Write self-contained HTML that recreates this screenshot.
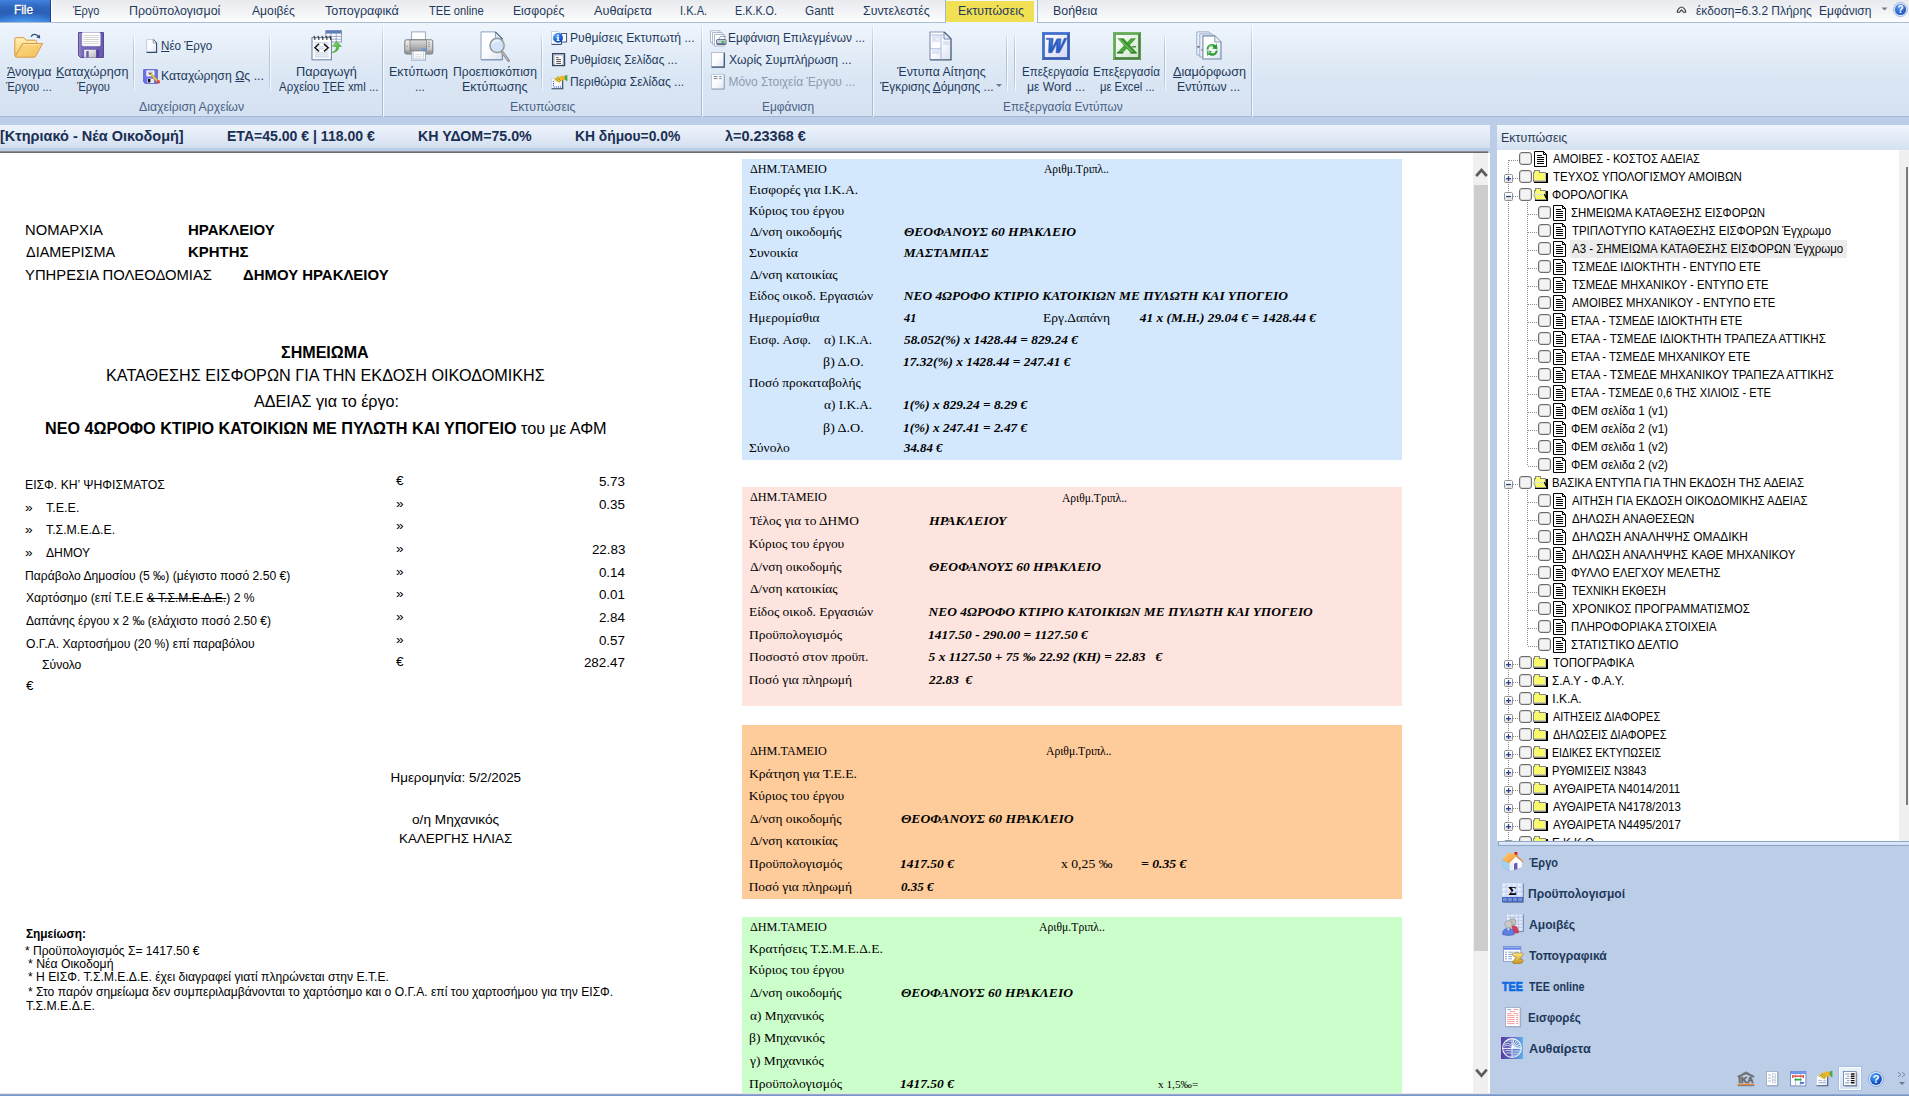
<!DOCTYPE html><html><head><meta charset="utf-8"><title>UI</title><style>html,body{margin:0;padding:0}body{width:1909px;height:1096px;overflow:hidden;position:relative;background:#bbcde7;font-family:"Liberation Sans",sans-serif}
.t{position:absolute;white-space:pre;line-height:1;transform-origin:0 0;font-family:"Liberation Sans",sans-serif;color:#000}
u{text-decoration:underline;text-underline-offset:1px}</style></head><body><div style="position:absolute;left:0px;top:0px;width:1909px;height:22px;background:linear-gradient(#e8eaee,#f1f2f5 45%,#fdfdfe)"></div><div style="position:absolute;left:0px;top:22px;width:1909px;height:95px;background:linear-gradient(#eff5fc,#e2ecf7 35%,#dae6f4 60%,#d6e2f1);border-top:1px solid #a9bbd5;box-sizing:border-box"></div><div style="position:absolute;left:0px;top:116px;width:1909px;height:1px;background:#a3b6d3"></div><div style="position:absolute;left:0px;top:117px;width:1909px;height:8px;background:#bbcde7"></div><div style="position:absolute;left:0px;top:0px;width:51px;height:22px;background:radial-gradient(ellipse 70% 60% at 50% 115%,#5cb0f8 0%,rgba(80,160,245,0.55) 45%,rgba(70,140,230,0) 100%),linear-gradient(#4282de,#3068c0 30%,#2a60b6 55%,#2d68c2 80%,#3a7cd6);border-right:1px solid #1b3f9a;box-sizing:border-box"></div><div style="position:absolute;left:51px;top:0px;width:1px;height:22px;background:#fff"></div><span class="t" style="left:13.55px;top:4px;font-size:12.5px;color:#fff;transform:scaleX(0.9474);-webkit-text-stroke:0.35px #fff;text-shadow:0 1px 1px rgba(20,40,90,0.5);">File</span><div style="position:absolute;left:945px;top:-2px;width:93px;height:25px;background:#f4f7fb;border:1px solid #a3b6d3;border-bottom:none;box-sizing:border-box"></div><div style="position:absolute;left:946px;top:1px;width:88px;height:21px;background:#f1e054"></div><div style="position:absolute;left:946px;top:22px;width:91px;height:1px;background:#eff5fc"></div><span class="t" style="left:73.20px;top:5px;font-size:12.5px;color:#1e395b;transform:scaleX(0.8767);">Έργο</span><span class="t" style="left:129.40px;top:5px;font-size:12.5px;color:#1e395b;transform:scaleX(0.9956);">Προϋπολογισμοί</span><span class="t" style="left:251.80px;top:5px;font-size:12.5px;color:#1e395b;transform:scaleX(0.9727);">Αμοιβές</span><span class="t" style="left:325.40px;top:5px;font-size:12.5px;color:#1e395b;transform:scaleX(1.0068);">Τοπογραφικά</span><span class="t" style="left:429.40px;top:5px;font-size:12.5px;color:#1e395b;transform:scaleX(0.8934);">ΤΕΕ online</span><span class="t" style="left:513.43px;top:5px;font-size:12.5px;color:#1e395b;transform:scaleX(0.9745);">Εισφορές</span><span class="t" style="left:594.00px;top:5px;font-size:12.5px;color:#1e395b;transform:scaleX(1.0196);">Αυθαίρετα</span><span class="t" style="left:679.71px;top:5px;font-size:12.5px;color:#1e395b;transform:scaleX(0.8897);">Ι.Κ.Α.</span><span class="t" style="left:735.44px;top:5px;font-size:12.5px;color:#1e395b;transform:scaleX(0.8638);">Ε.Κ.Κ.Ο.</span><span class="t" style="left:805.46px;top:5px;font-size:12.5px;color:#1e395b;transform:scaleX(0.9400);">Gantt</span><span class="t" style="left:862.91px;top:5px;font-size:12.5px;color:#1e395b;transform:scaleX(0.9894);">Συντελεστές</span><span class="t" style="left:958.01px;top:5px;font-size:12.5px;color:#1e395b;transform:scaleX(0.9894);">Εκτυπώσεις</span><span class="t" style="left:1053.21px;top:5px;font-size:12.5px;color:#1e395b;transform:scaleX(0.9907);">Βοήθεια</span><svg style="position:absolute;left:1676px;top:6px" width="11" height="8" viewBox="0 0 11 8"><path d="M1.2 6.3 C1.2 3.5 4 1 5.5 1 C7 1 9.8 3.5 9.8 6.3 L7.6 6.3 L5.5 3.8 L3.4 6.3 Z" fill="none" stroke="#3a3a3a" stroke-width="1.1" stroke-linejoin="round"/></svg><span class="t" style="left:1696.30px;top:5px;font-size:12.5px;color:#1e395b;transform:scaleX(0.9562);">έκδοση=6.3.2 Πλήρης</span><span class="t" style="left:1819.44px;top:5px;font-size:12.5px;color:#1e395b;transform:scaleX(0.9604);">Εμφάνιση</span><svg style="position:absolute;left:1881px;top:7px" width="7" height="4" viewBox="0 0 7 4"><path d="M0.5 0.5 L6.5 0.5 L3.5 3.5 Z" fill="#6d7a8c"/></svg><svg style="position:absolute;left:1893px;top:2px" width="15" height="15" viewBox="0 0 15 15"><defs><radialGradient id="hg" cx="0.4" cy="0.3" r="0.8"><stop offset="0" stop-color="#5b9bf0"/><stop offset="1" stop-color="#1247b5"/></radialGradient></defs><circle cx="7.5" cy="7.5" r="7" fill="#e8f0fb" stroke="#8aa6d6" stroke-width="0.8"/><circle cx="7.5" cy="7.5" r="5.6" fill="url(#hg)"/><text x="7.5" y="11.2" font-family="Liberation Sans" font-size="10" font-weight="700" fill="#fff" text-anchor="middle">?</text></svg><div style="position:absolute;left:382px;top:25px;width:1px;height:92px;background:linear-gradient(rgba(150,170,200,0.15),#a9bbd5 30%,#a9bbd5)"></div><div style="position:absolute;left:383px;top:25px;width:1px;height:92px;background:rgba(255,255,255,0.7)"></div><div style="position:absolute;left:701px;top:25px;width:1px;height:92px;background:linear-gradient(rgba(150,170,200,0.15),#a9bbd5 30%,#a9bbd5)"></div><div style="position:absolute;left:702px;top:25px;width:1px;height:92px;background:rgba(255,255,255,0.7)"></div><div style="position:absolute;left:872px;top:25px;width:1px;height:92px;background:linear-gradient(rgba(150,170,200,0.15),#a9bbd5 30%,#a9bbd5)"></div><div style="position:absolute;left:873px;top:25px;width:1px;height:92px;background:rgba(255,255,255,0.7)"></div><div style="position:absolute;left:1251px;top:25px;width:1px;height:92px;background:linear-gradient(rgba(150,170,200,0.15),#a9bbd5 30%,#a9bbd5)"></div><div style="position:absolute;left:1252px;top:25px;width:1px;height:92px;background:rgba(255,255,255,0.7)"></div><div style="position:absolute;left:133px;top:35px;width:1px;height:55px;background:linear-gradient(rgba(160,178,205,0.2),#b4c3da 25%,#b4c3da 75%,rgba(160,178,205,0.2))"></div><div style="position:absolute;left:134px;top:35px;width:1px;height:55px;background:rgba(255,255,255,0.75)"></div><div style="position:absolute;left:269px;top:35px;width:1px;height:55px;background:linear-gradient(rgba(160,178,205,0.2),#b4c3da 25%,#b4c3da 75%,rgba(160,178,205,0.2))"></div><div style="position:absolute;left:270px;top:35px;width:1px;height:55px;background:rgba(255,255,255,0.75)"></div><div style="position:absolute;left:541px;top:35px;width:1px;height:55px;background:linear-gradient(rgba(160,178,205,0.2),#b4c3da 25%,#b4c3da 75%,rgba(160,178,205,0.2))"></div><div style="position:absolute;left:542px;top:35px;width:1px;height:55px;background:rgba(255,255,255,0.75)"></div><div style="position:absolute;left:1006px;top:35px;width:1px;height:55px;background:linear-gradient(rgba(160,178,205,0.2),#b4c3da 25%,#b4c3da 75%,rgba(160,178,205,0.2))"></div><div style="position:absolute;left:1007px;top:35px;width:1px;height:55px;background:rgba(255,255,255,0.75)"></div><div style="position:absolute;left:1014px;top:35px;width:1px;height:55px;background:linear-gradient(rgba(160,178,205,0.2),#b4c3da 25%,#b4c3da 75%,rgba(160,178,205,0.2))"></div><div style="position:absolute;left:1015px;top:35px;width:1px;height:55px;background:rgba(255,255,255,0.75)"></div><div style="position:absolute;left:1164px;top:35px;width:1px;height:55px;background:linear-gradient(rgba(160,178,205,0.2),#b4c3da 25%,#b4c3da 75%,rgba(160,178,205,0.2))"></div><div style="position:absolute;left:1165px;top:35px;width:1px;height:55px;background:rgba(255,255,255,0.75)"></div><span class="t" style="left:6.80px;top:66px;font-size:12px;color:#1e395b;transform:scaleX(1.0349);"><u>Ά</u>νοιγμα</span><span class="t" style="left:6.30px;top:81px;font-size:12px;color:#1e395b;transform:scaleX(0.9375);">Έργου ...</span><span class="t" style="left:56.05px;top:66px;font-size:12px;color:#1e395b;transform:scaleX(1.0471);"><u>Κ</u>αταχώρηση</span><span class="t" style="left:76.50px;top:81px;font-size:12px;color:#1e395b;transform:scaleX(0.9286);">Έργου</span><span class="t" style="left:161.23px;top:40px;font-size:12px;color:#1e395b;transform:scaleX(0.9673);"><u>Ν</u>έο Έργο</span><span class="t" style="left:161.48px;top:70px;font-size:12px;color:#1e395b;transform:scaleX(1.0222);">Καταχώρηση <u>Ω</u>ς ...</span><span class="t" style="left:296.14px;top:66px;font-size:12px;color:#1e395b;transform:scaleX(1.0607);">Παραγωγή</span><span class="t" style="left:278.50px;top:81px;font-size:12px;color:#1e395b;transform:scaleX(0.9544);">Αρχείου <u>Τ</u>ΕΕ xml ...</span><span class="t" style="left:139.20px;top:101px;font-size:12px;color:#4a6185;transform:scaleX(1.0235);">Διαχείριση Αρχείων</span><span class="t" style="left:389.26px;top:66px;font-size:12px;color:#1e395b;transform:scaleX(1.0364);">Εκτύπωση</span><span class="t" style="left:414.64px;top:81px;font-size:12px;color:#1e395b;transform:scaleX(0.9625);">...</span><span class="t" style="left:452.59px;top:66px;font-size:12px;color:#1e395b;transform:scaleX(1.0098);">Προεπισκόπιση</span><span class="t" style="left:462.26px;top:81px;font-size:12px;color:#1e395b;transform:scaleX(1.0443);">Εκτύπωσης</span><span class="t" style="left:569.59px;top:32px;font-size:12px;color:#1e395b;transform:scaleX(1.0149);">Ρυθμίσεις Εκτυπωτή ...</span><span class="t" style="left:569.62px;top:54px;font-size:12px;color:#1e395b;transform:scaleX(0.9806);">Ρυθμίσεις Σελίδας ...</span><span class="t" style="left:569.59px;top:76px;font-size:12px;color:#1e395b;transform:scaleX(1.0062);">Περιθώρια Σελίδας ...</span><span class="t" style="left:510.38px;top:101px;font-size:12px;color:#4a6185;transform:scaleX(1.0238);">Εκτυπώσεις</span><span class="t" style="left:728.41px;top:32px;font-size:12px;color:#1e395b;transform:scaleX(0.9861);">Εμφάνιση Επιλεγμένων ...</span><span class="t" style="left:729.40px;top:54px;font-size:12px;color:#1e395b;transform:scaleX(1.0092);">Χωρίς Συμπλήρωση ...</span><span class="t" style="left:728.40px;top:76px;font-size:12px;color:#8d9bb0;">Μόνο Στοιχεία Έργου ...</span><span class="t" style="left:761.71px;top:101px;font-size:12px;color:#4a6185;transform:scaleX(0.9941);">Εμφάνιση</span><span class="t" style="left:897.10px;top:66px;font-size:12px;color:#1e395b;transform:scaleX(1.0256);">Έντυπα Αίτησης</span><span class="t" style="left:880.20px;top:81px;font-size:12px;color:#1e395b;transform:scaleX(0.9877);">Έγκρισης <u>Δ</u>όμησης ...</span><span class="t" style="left:1022.34px;top:66px;font-size:12px;color:#1e395b;transform:scaleX(0.9632);">Επεξεργασία</span><span class="t" style="left:1027.29px;top:81px;font-size:12px;color:#1e395b;transform:scaleX(1.0109);">με Word ...</span><span class="t" style="left:1093.23px;top:66px;font-size:12px;color:#1e395b;transform:scaleX(0.9676);">Επεξεργασία</span><span class="t" style="left:1100.36px;top:81px;font-size:12px;color:#1e395b;transform:scaleX(0.9375);">με Excel ...</span><span class="t" style="left:1172.90px;top:66px;font-size:12px;color:#1e395b;transform:scaleX(1.0536);"><u>Δ</u>ιαμόρφωση</span><span class="t" style="left:1177.18px;top:81px;font-size:12px;color:#1e395b;transform:scaleX(1.0183);">Εντύπων ...</span><span class="t" style="left:1003.21px;top:101px;font-size:12px;color:#4a6185;transform:scaleX(0.9875);">Επεξεργασία Εντύπων</span><svg style="position:absolute;left:996px;top:84px" width="6" height="3" viewBox="0 0 6 3"><path d="M0 0 L6 0 L3 3 Z" fill="#6d7a8c"/></svg><div style="position:absolute;left:0px;top:125px;width:1490px;height:23px;background:linear-gradient(#eef4fc,#e1eaf6 50%,#d3dff0)"></div><div style="position:absolute;left:0px;top:148px;width:1490px;height:3px;background:#bbcde7"></div><span class="t" style="left:0.01px;top:129px;font-size:14.6px;font-weight:700;color:#1a2f52;transform:scaleX(0.9929);">[Κτηριακό - Νέα Οικοδομή]</span><span class="t" style="left:227.44px;top:129px;font-size:14.6px;font-weight:700;color:#1a2f52;transform:scaleX(0.9625);">ΕΤΑ=45.00 € | 118.00 €</span><span class="t" style="left:418.03px;top:129px;font-size:14.6px;font-weight:700;color:#1a2f52;transform:scaleX(0.9741);">ΚΗ ΥΔΟΜ=75.0%</span><span class="t" style="left:575.05px;top:129px;font-size:14.6px;font-weight:700;color:#1a2f52;transform:scaleX(0.9473);">ΚΗ δήμου=0.0%</span><span class="t" style="left:724.80px;top:129px;font-size:14.6px;font-weight:700;color:#1a2f52;transform:scaleX(0.9901);">λ=0.23368 €</span><div style="position:absolute;left:0px;top:151px;width:1490px;height:2px;background:#b9cbe5"></div><div style="position:absolute;left:0px;top:151px;width:1488px;height:1px;background:#8b8e94"></div><div style="position:absolute;left:0px;top:152px;width:1488px;height:1px;background:#696b70"></div><div style="position:absolute;left:0px;top:153px;width:1490px;height:940px;background:#fff"></div><div style="position:absolute;left:0px;top:1093px;width:1490px;height:1px;background:#e3e3e3"></div><div style="position:absolute;left:1473px;top:153px;width:15px;height:940px;background:#f0f0f0"></div><div style="position:absolute;left:1474px;top:185px;width:14px;height:766px;background:#cdcdcd"></div><svg style="position:absolute;left:1475px;top:166px" width="13" height="12" viewBox="0 0 13 12"><path d="M1.2 10 L6.5 4 L11.8 10" fill="none" stroke="#5c5c5c" stroke-width="2.7"/></svg><svg style="position:absolute;left:1475px;top:1067px" width="13" height="12" viewBox="0 0 13 12"><path d="M1.2 2.6 L6.5 8.6 L11.8 2.6" fill="none" stroke="#5c5c5c" stroke-width="2.7"/></svg><span class="t" style="left:25.38px;top:223px;font-size:14.5px;transform:scaleX(1.0173);">ΝΟΜΑΡΧΙΑ</span><span class="t" style="left:187.77px;top:223px;font-size:14.5px;font-weight:700;transform:scaleX(1.0337);">ΗΡΑΚΛΕΙΟΥ</span><span class="t" style="left:26.40px;top:245px;font-size:14.5px;transform:scaleX(0.9956);">ΔΙΑΜΕΡΙΣΜΑ</span><span class="t" style="left:187.77px;top:245px;font-size:14.5px;font-weight:700;transform:scaleX(1.0298);">ΚΡΗΤΗΣ</span><span class="t" style="left:25.38px;top:268px;font-size:14.5px;transform:scaleX(1.0214);">ΥΠΗΡΕΣΙΑ ΠΟΛΕΟΔΟΜΙΑΣ</span><span class="t" style="left:243.17px;top:268px;font-size:14.5px;font-weight:700;transform:scaleX(1.0293);">ΔΗΜΟΥ ΗΡΑΚΛΕΙΟΥ</span><span class="t" style="left:281.40px;top:345px;font-size:16px;font-weight:700;transform:scaleX(1.0047);">ΣΗΜΕΙΩΜΑ</span><span class="t" style="left:105.99px;top:368px;font-size:16px;transform:scaleX(1.0127);">ΚΑΤΑΘΕΣΗΣ ΕΙΣΦΟΡΩΝ ΓΙΑ ΤΗΝ ΕΚΔΟΣΗ ΟΙΚΟΔΟΜΙΚΗΣ</span><span class="t" style="left:253.80px;top:394px;font-size:16px;transform:scaleX(1.0092);">ΑΔΕΙΑΣ για το έργο:</span><span class="t" style="left:44.69px;top:421px;font-size:16px;font-weight:700;transform:scaleX(1.0103);">ΝΕΟ 4ΩΡΟΦΟ ΚΤΙΡΙΟ ΚΑΤΟΙΚΙΩΝ ΜΕ ΠΥΛΩΤΗ ΚΑΙ ΥΠΟΓΕΙΟ</span><span class="t" style="left:521.00px;top:421px;font-size:16px;transform:scaleX(1.0145);">του με ΑΦΜ</span><span class="t" style="left:24.78px;top:479px;font-size:12px;transform:scaleX(1.0184);">ΕΙΣΦ. ΚΗ’ ΨΗΦΙΣΜΑΤΟΣ</span><span class="t" style="left:24.66px;top:502px;font-size:12px;transform:scaleX(1.1400);">»</span><span class="t" style="left:45.70px;top:502px;font-size:12px;transform:scaleX(1.0419);">Τ.Ε.Ε.</span><span class="t" style="left:24.66px;top:524px;font-size:12px;transform:scaleX(1.1400);">»</span><span class="t" style="left:45.70px;top:524px;font-size:12px;transform:scaleX(1.0242);">Τ.Σ.Μ.Ε.Δ.Ε.</span><span class="t" style="left:24.66px;top:547px;font-size:12px;transform:scaleX(1.1400);">»</span><span class="t" style="left:45.70px;top:547px;font-size:12px;transform:scaleX(1.0116);">ΔΗΜΟΥ</span><span class="t" style="left:24.79px;top:570px;font-size:12px;transform:scaleX(1.0103);">Παράβολο Δημοσίου (5 ‰) (μέγιστο ποσό 2.50 €)</span><span class="t" style="left:25.80px;top:592px;font-size:12px;transform:scaleX(1.0111);">Χαρτόσημο (επί Τ.Ε.Ε <s>&amp; Τ.Σ.Μ.Ε.Δ.Ε.</s>) 2 %</span><span class="t" style="left:25.80px;top:615px;font-size:12px;transform:scaleX(1.0049);">Δαπάνης έργου x 2 ‰ (ελάχιστο ποσό 2.50 €)</span><span class="t" style="left:25.80px;top:638px;font-size:12px;transform:scaleX(1.0120);">Ο.Γ.Α. Χαρτοσήμου (20 %) επί παραβόλου</span><span class="t" style="left:41.99px;top:659px;font-size:12px;transform:scaleX(1.0105);">Σύνολο</span><span class="t" style="left:25.80px;top:680px;font-size:12px;transform:scaleX(1.1143);">€</span><span class="t" style="left:396.40px;top:474px;font-size:13.4px;transform:scaleX(1.0143);">€</span><span class="t" style="left:395.58px;top:497px;font-size:13.4px;transform:scaleX(1.0167);">»</span><span class="t" style="left:395.58px;top:519px;font-size:13.4px;transform:scaleX(1.0167);">»</span><span class="t" style="left:395.58px;top:542px;font-size:13.4px;transform:scaleX(1.0167);">»</span><span class="t" style="left:395.58px;top:565px;font-size:13.4px;transform:scaleX(1.0167);">»</span><span class="t" style="left:395.58px;top:587px;font-size:13.4px;transform:scaleX(1.0167);">»</span><span class="t" style="left:395.58px;top:610px;font-size:13.4px;transform:scaleX(1.0167);">»</span><span class="t" style="left:395.58px;top:633px;font-size:13.4px;transform:scaleX(1.0167);">»</span><span class="t" style="left:396.40px;top:655px;font-size:13.4px;transform:scaleX(1.0143);">€</span><span class="t" style="left:598.90px;top:475px;font-size:13.4px;">5.73</span><span class="t" style="left:598.90px;top:498px;font-size:13.4px;">0.35</span><span class="t" style="left:591.90px;top:543px;font-size:13.4px;">22.83</span><span class="t" style="left:598.90px;top:566px;font-size:13.4px;">0.14</span><span class="t" style="left:598.90px;top:588px;font-size:13.4px;">0.01</span><span class="t" style="left:598.90px;top:611px;font-size:13.4px;">2.84</span><span class="t" style="left:598.90px;top:634px;font-size:13.4px;">0.57</span><span class="t" style="left:583.90px;top:656px;font-size:13.4px;">282.47</span><span class="t" style="left:390.50px;top:771px;font-size:13.4px;">Ημερομηνία: 5/2/2025</span><span class="t" style="left:412.18px;top:813px;font-size:13.4px;transform:scaleX(1.0190);">ο/η Μηχανικός</span><span class="t" style="left:399.00px;top:832px;font-size:13.4px;">ΚΑΛΕΡΓΗΣ ΗΛΙΑΣ</span><span class="t" style="left:26.20px;top:928px;font-size:12px;font-weight:700;transform:scaleX(0.9883);">Σημείωση:</span><span class="t" style="left:25.20px;top:945px;font-size:12px;transform:scaleX(1.0046);">* Προϋπολογισμός Σ= 1417.50 €</span><span class="t" style="left:27.88px;top:958px;font-size:12px;transform:scaleX(1.0207);">* Νέα Οικοδομή</span><span class="t" style="left:27.89px;top:971px;font-size:12px;transform:scaleX(1.0130);">* Η ΕΙΣΦ. Τ.Σ.Μ.Ε.Δ.Ε. έχει διαγραφεί γιατί πληρώνεται στην Ε.Τ.Ε.</span><span class="t" style="left:27.89px;top:986px;font-size:12px;transform:scaleX(1.0093);">* Στο παρόν σημείωμα δεν συμπεριλαμβάνονται το χαρτόσημο και ο Ο.Γ.Α. επί του χαρτοσήμου για την ΕΙΣΦ.</span><span class="t" style="left:26.20px;top:1000px;font-size:12px;transform:scaleX(1.0197);">Τ.Σ.Μ.Ε.Δ.Ε.</span><div style="position:absolute;left:742px;top:159px;width:660px;height:301px;background:#d3e8fd"></div><span class="t" style="left:749.70px;top:163px;font-size:12px;font-family:'Liberation Serif', serif;transform:scaleX(1.0147);">ΔΗΜ.ΤΑΜΕΙΟ</span><span class="t" style="left:1043.90px;top:164px;font-size:11.5px;font-family:'Liberation Serif', serif;transform:scaleX(1.0048);">Αριθμ.Τριπλ..</span><span class="t" style="left:748.69px;top:183px;font-size:13.4px;font-family:'Liberation Serif', serif;transform:scaleX(1.0085);">Εισφορές για Ι.Κ.Α.</span><span class="t" style="left:748.70px;top:204px;font-size:13.4px;font-family:'Liberation Serif', serif;">Κύριος του έργου</span><span class="t" style="left:749.70px;top:225px;font-size:13.4px;font-family:'Liberation Serif', serif;transform:scaleX(0.9957);">Δ/νση οικοδομής</span><span class="t" style="left:903.80px;top:225px;font-size:13.4px;font-family:'Liberation Serif', serif;font-weight:700;font-style:italic;transform:scaleX(1.0112);">ΘΕΟΦΑΝΟΥΣ 60 ΗΡΑΚΛΕΙΟ</span><span class="t" style="left:748.69px;top:246px;font-size:13.4px;font-family:'Liberation Serif', serif;transform:scaleX(1.0128);">Συνοικία</span><span class="t" style="left:903.80px;top:246px;font-size:13.4px;font-family:'Liberation Serif', serif;font-weight:700;font-style:italic;">ΜΑΣΤΑΜΠΑΣ</span><span class="t" style="left:749.70px;top:268px;font-size:13.4px;font-family:'Liberation Serif', serif;transform:scaleX(0.9955);">Δ/νση κατοικίας</span><span class="t" style="left:748.70px;top:289px;font-size:13.4px;font-family:'Liberation Serif', serif;transform:scaleX(1.0049);">Είδος οικοδ. Εργασιών</span><span class="t" style="left:903.80px;top:289px;font-size:13.4px;font-family:'Liberation Serif', serif;font-weight:700;font-style:italic;">ΝΕΟ 4ΩΡΟΦΟ ΚΤΙΡΙΟ ΚΑΤΟΙΚΙΩΝ ΜΕ ΠΥΛΩΤΗ ΚΑΙ ΥΠΟΓΕΙΟ</span><span class="t" style="left:748.70px;top:311px;font-size:13.4px;font-family:'Liberation Serif', serif;">Ημερομίσθια</span><span class="t" style="left:903.80px;top:311px;font-size:13.4px;font-family:'Liberation Serif', serif;font-weight:700;font-style:italic;transform:scaleX(0.9167);">41</span><span class="t" style="left:1043.09px;top:311px;font-size:13.4px;font-family:'Liberation Serif', serif;transform:scaleX(1.0062);">Εργ.Δαπάνη</span><span class="t" style="left:1139.80px;top:311px;font-size:13.4px;font-family:'Liberation Serif', serif;font-weight:700;font-style:italic;">41 x (Μ.Η.) 29.04 € = 1428.44 €</span><span class="t" style="left:748.68px;top:333px;font-size:13.4px;font-family:'Liberation Serif', serif;transform:scaleX(1.0220);">Εισφ. Ασφ.</span><span class="t" style="left:824.10px;top:333px;font-size:13.4px;font-family:'Liberation Serif', serif;transform:scaleX(0.9896);">α) Ι.Κ.Α.</span><span class="t" style="left:903.80px;top:333px;font-size:13.4px;font-family:'Liberation Serif', serif;font-weight:700;font-style:italic;transform:scaleX(0.9931);">58.052(%) x 1428.44 = 829.24 €</span><span class="t" style="left:823.05px;top:355px;font-size:13.4px;font-family:'Liberation Serif', serif;transform:scaleX(1.0459);">β) Δ.Ο.</span><span class="t" style="left:902.81px;top:355px;font-size:13.4px;font-family:'Liberation Serif', serif;font-weight:700;font-style:italic;transform:scaleX(0.9946);">17.32(%) x 1428.44 = 247.41 €</span><span class="t" style="left:748.70px;top:376px;font-size:13.4px;font-family:'Liberation Serif', serif;">Ποσό προκαταβολής</span><span class="t" style="left:824.10px;top:398px;font-size:13.4px;font-family:'Liberation Serif', serif;transform:scaleX(0.9896);">α) Ι.Κ.Α.</span><span class="t" style="left:902.80px;top:398px;font-size:13.4px;font-family:'Liberation Serif', serif;font-weight:700;font-style:italic;transform:scaleX(0.9960);">1(%) x 829.24 = 8.29 €</span><span class="t" style="left:823.05px;top:421px;font-size:13.4px;font-family:'Liberation Serif', serif;transform:scaleX(1.0459);">β) Δ.Ο.</span><span class="t" style="left:902.80px;top:421px;font-size:13.4px;font-family:'Liberation Serif', serif;font-weight:700;font-style:italic;transform:scaleX(0.9960);">1(%) x 247.41 = 2.47 €</span><span class="t" style="left:748.69px;top:441px;font-size:13.4px;font-family:'Liberation Serif', serif;transform:scaleX(1.0077);">Σύνολο</span><span class="t" style="left:903.80px;top:441px;font-size:13.4px;font-family:'Liberation Serif', serif;font-weight:700;font-style:italic;transform:scaleX(0.9561);">34.84 €</span><div style="position:absolute;left:742px;top:487px;width:660px;height:219px;background:#fde4de"></div><span class="t" style="left:749.70px;top:491px;font-size:12px;font-family:'Liberation Serif', serif;transform:scaleX(1.0147);">ΔΗΜ.ΤΑΜΕΙΟ</span><span class="t" style="left:1061.50px;top:493px;font-size:11.5px;font-family:'Liberation Serif', serif;transform:scaleX(1.0048);">Αριθμ.Τριπλ..</span><span class="t" style="left:749.70px;top:514px;font-size:13.4px;font-family:'Liberation Serif', serif;">Τέλος για το ΔΗΜΟ</span><span class="t" style="left:928.60px;top:514px;font-size:13.4px;font-family:'Liberation Serif', serif;font-weight:700;font-style:italic;transform:scaleX(1.0360);">ΗΡΑΚΛΕΙΟΥ</span><span class="t" style="left:748.70px;top:537px;font-size:13.4px;font-family:'Liberation Serif', serif;">Κύριος του έργου</span><span class="t" style="left:749.70px;top:560px;font-size:13.4px;font-family:'Liberation Serif', serif;transform:scaleX(0.9957);">Δ/νση οικοδομής</span><span class="t" style="left:928.60px;top:560px;font-size:13.4px;font-family:'Liberation Serif', serif;font-weight:700;font-style:italic;transform:scaleX(1.0112);">ΘΕΟΦΑΝΟΥΣ 60 ΗΡΑΚΛΕΙΟ</span><span class="t" style="left:749.70px;top:582px;font-size:13.4px;font-family:'Liberation Serif', serif;transform:scaleX(0.9955);">Δ/νση κατοικίας</span><span class="t" style="left:748.70px;top:605px;font-size:13.4px;font-family:'Liberation Serif', serif;transform:scaleX(1.0049);">Είδος οικοδ. Εργασιών</span><span class="t" style="left:928.60px;top:605px;font-size:13.4px;font-family:'Liberation Serif', serif;font-weight:700;font-style:italic;">ΝΕΟ 4ΩΡΟΦΟ ΚΤΙΡΙΟ ΚΑΤΟΙΚΙΩΝ ΜΕ ΠΥΛΩΤΗ ΚΑΙ ΥΠΟΓΕΙΟ</span><span class="t" style="left:748.69px;top:628px;font-size:13.4px;font-family:'Liberation Serif', serif;transform:scaleX(1.0088);">Προϋπολογισμός</span><span class="t" style="left:927.59px;top:628px;font-size:13.4px;font-family:'Liberation Serif', serif;font-weight:700;font-style:italic;transform:scaleX(1.0070);">1417.50 - 290.00 = 1127.50 €</span><span class="t" style="left:748.69px;top:650px;font-size:13.4px;font-family:'Liberation Serif', serif;transform:scaleX(1.0068);">Ποσοστό στον προϋπ.</span><span class="t" style="left:928.60px;top:650px;font-size:13.4px;font-family:'Liberation Serif', serif;font-weight:700;font-style:italic;">5 x 1127.50 + 75 ‰ 22.92 (ΚΗ) = 22.83   €</span><span class="t" style="left:748.70px;top:673px;font-size:13.4px;font-family:'Liberation Serif', serif;">Ποσό για πληρωμή</span><span class="t" style="left:928.60px;top:673px;font-size:13.4px;font-family:'Liberation Serif', serif;font-weight:700;font-style:italic;transform:scaleX(0.9932);">22.83  €</span><div style="position:absolute;left:742px;top:725px;width:660px;height:174px;background:#fecb9a"></div><span class="t" style="left:749.70px;top:745px;font-size:12px;font-family:'Liberation Serif', serif;transform:scaleX(1.0147);">ΔΗΜ.ΤΑΜΕΙΟ</span><span class="t" style="left:1045.79px;top:746px;font-size:11.5px;font-family:'Liberation Serif', serif;transform:scaleX(1.0127);">Αριθμ.Τριπλ..</span><span class="t" style="left:748.69px;top:767px;font-size:13.4px;font-family:'Liberation Serif', serif;transform:scaleX(1.0124);">Κράτηση για Τ.Ε.Ε.</span><span class="t" style="left:748.70px;top:789px;font-size:13.4px;font-family:'Liberation Serif', serif;">Κύριος του έργου</span><span class="t" style="left:749.70px;top:812px;font-size:13.4px;font-family:'Liberation Serif', serif;transform:scaleX(0.9957);">Δ/νση οικοδομής</span><span class="t" style="left:901.30px;top:812px;font-size:13.4px;font-family:'Liberation Serif', serif;font-weight:700;font-style:italic;transform:scaleX(1.0141);">ΘΕΟΦΑΝΟΥΣ 60 ΗΡΑΚΛΕΙΟ</span><span class="t" style="left:749.70px;top:834px;font-size:13.4px;font-family:'Liberation Serif', serif;transform:scaleX(0.9955);">Δ/νση κατοικίας</span><span class="t" style="left:748.69px;top:857px;font-size:13.4px;font-family:'Liberation Serif', serif;transform:scaleX(1.0088);">Προϋπολογισμός</span><span class="t" style="left:900.29px;top:857px;font-size:13.4px;font-family:'Liberation Serif', serif;font-weight:700;font-style:italic;transform:scaleX(1.0057);">1417.50 €</span><span class="t" style="left:1060.68px;top:857px;font-size:13.4px;font-family:'Liberation Serif', serif;transform:scaleX(1.0224);">x 0,25 ‰</span><span class="t" style="left:1140.78px;top:857px;font-size:13.4px;font-family:'Liberation Serif', serif;font-weight:700;font-style:italic;transform:scaleX(1.0205);">= 0.35 €</span><span class="t" style="left:748.70px;top:880px;font-size:13.4px;font-family:'Liberation Serif', serif;">Ποσό για πληρωμή</span><span class="t" style="left:901.30px;top:880px;font-size:13.4px;font-family:'Liberation Serif', serif;font-weight:700;font-style:italic;transform:scaleX(0.9676);">0.35 €</span><div style="position:absolute;left:742px;top:917px;width:660px;height:176px;background:#ccfecb"></div><span class="t" style="left:749.70px;top:921px;font-size:12px;font-family:'Liberation Serif', serif;transform:scaleX(1.0147);">ΔΗΜ.ΤΑΜΕΙΟ</span><span class="t" style="left:1038.58px;top:922px;font-size:11.5px;font-family:'Liberation Serif', serif;transform:scaleX(1.0175);">Αριθμ.Τριπλ..</span><span class="t" style="left:748.69px;top:942px;font-size:13.4px;font-family:'Liberation Serif', serif;transform:scaleX(1.0099);">Κρατήσεις Τ.Σ.Μ.Ε.Δ.Ε.</span><span class="t" style="left:748.70px;top:963px;font-size:13.4px;font-family:'Liberation Serif', serif;">Κύριος του έργου</span><span class="t" style="left:749.70px;top:986px;font-size:13.4px;font-family:'Liberation Serif', serif;transform:scaleX(0.9957);">Δ/νση οικοδομής</span><span class="t" style="left:901.30px;top:986px;font-size:13.4px;font-family:'Liberation Serif', serif;font-weight:700;font-style:italic;transform:scaleX(1.0100);">ΘΕΟΦΑΝΟΥΣ 60 ΗΡΑΚΛΕΙΟ</span><span class="t" style="left:749.70px;top:1009px;font-size:13.4px;font-family:'Liberation Serif', serif;transform:scaleX(0.9907);">α) Μηχανικός</span><span class="t" style="left:748.68px;top:1031px;font-size:13.4px;font-family:'Liberation Serif', serif;transform:scaleX(1.0178);">β) Μηχανικός</span><span class="t" style="left:749.70px;top:1054px;font-size:13.4px;font-family:'Liberation Serif', serif;transform:scaleX(1.0041);">γ) Μηχανικός</span><span class="t" style="left:748.69px;top:1077px;font-size:13.4px;font-family:'Liberation Serif', serif;transform:scaleX(1.0088);">Προϋπολογισμός</span><span class="t" style="left:900.29px;top:1077px;font-size:13.4px;font-family:'Liberation Serif', serif;font-weight:700;font-style:italic;transform:scaleX(1.0057);">1417.50 €</span><span class="t" style="left:1157.97px;top:1079px;font-size:11px;font-family:'Liberation Serif', serif;transform:scaleX(1.0270);">x 1,5‰=</span><svg width="0" height="0" style="position:absolute"><defs>
<pattern id="dith" width="2" height="2" patternUnits="userSpaceOnUse"><rect width="2" height="2" fill="#ffff00"/><rect width="1" height="1" fill="#f4f4d8"/><rect x="1" y="1" width="1" height="1" fill="#f4f4d8"/></pattern>
</defs></svg><div style="position:absolute;left:1490px;top:117px;width:419px;height:979px;background:#bbcde7"></div><div style="position:absolute;left:1497px;top:125px;width:412px;height:25px;background:linear-gradient(#eff5fc,#e2ebf7 50%,#d5e1f2)"></div><span class="t" style="left:1501.01px;top:132px;font-size:12.5px;color:#2b3a52;transform:scaleX(0.9924);">Εκτυπώσεις</span><div style="position:absolute;left:1497px;top:150px;width:412px;height:691px;overflow:hidden"><div style="position:absolute;left:0px;top:0px;width:402px;height:691px;background:#fff"></div><div style="position:absolute;left:402px;top:0px;width:10px;height:691px;background:#f0f0f0"></div><div style="position:absolute;left:409px;top:17px;width:2px;height:638px;background:#7a7a7a"></div><div style="position:absolute;left:11px;top:10px;width:1px;height:700px;background:repeating-linear-gradient(180deg,#8c8c8c 0 1px,transparent 1px 2px)"></div><div style="position:absolute;left:30px;top:52px;width:1px;height:263px;background:repeating-linear-gradient(180deg,#8c8c8c 0 1px,transparent 1px 2px)"></div><div style="position:absolute;left:30px;top:340px;width:1px;height:155px;background:repeating-linear-gradient(180deg,#8c8c8c 0 1px,transparent 1px 2px)"></div><div style="position:absolute;left:12px;top:10px;width:10px;height:1px;background:repeating-linear-gradient(90deg,#8c8c8c 0 1px,transparent 1px 2px)"></div><div style="position:absolute;left:22px;top:2px;width:13px;height:13px;box-sizing:border-box;border:1px solid #6e6e6e;border-radius:3px;background:#f3f3f3;box-shadow:inset 0 0 0 0.5px #bdbdbd"></div><svg style="position:absolute;left:37px;top:1px" width="13" height="16" viewBox="0 0 13 16"><path d="M0.5 0.5 H9.5 L12.5 3.5 V15.5 H0.5 Z" fill="#fff" stroke="#000" stroke-width="1"/><path d="M9.5 0.5 V3.5 H12.5" fill="none" stroke="#000" stroke-width="1"/><g shape-rendering="crispEdges"><rect x="3" y="4" width="5" height="1"/><rect x="3" y="6" width="7" height="1"/><rect x="3" y="8" width="7" height="1"/><rect x="3" y="10" width="7" height="1"/><rect x="3" y="12" width="7" height="1"/></g></svg><span class="t" style="left:56.30px;top:3px;font-size:12px;transform:scaleX(0.9272);">ΑΜΟΙΒΕΣ - ΚΟΣΤΟΣ ΑΔΕΙΑΣ</span><div style="position:absolute;left:12px;top:28px;width:10px;height:1px;background:repeating-linear-gradient(90deg,#8c8c8c 0 1px,transparent 1px 2px)"></div><svg style="position:absolute;left:7px;top:24px" width="9" height="9" viewBox="0 0 9 9"><rect x="0.5" y="0.5" width="8" height="8" rx="1" fill="#fff" stroke="#919191"/><rect x="1" y="5" width="7" height="3" fill="#e6e6e6"/><path d="M2 4.5 H7 M4.5 2 V7" stroke="#27408f" stroke-width="1.25"/></svg><div style="position:absolute;left:22px;top:20px;width:13px;height:13px;box-sizing:border-box;border:1px solid #6e6e6e;border-radius:3px;background:#f3f3f3;box-shadow:inset 0 0 0 0.5px #bdbdbd"></div><svg style="position:absolute;left:36px;top:20px" width="15" height="13" viewBox="0 0 15 13"><g shape-rendering="crispEdges"><rect x="1" y="11" width="13.5" height="1.5" fill="#000"/><rect x="13" y="3" width="1.5" height="9.5" fill="#000"/><rect x="0" y="2" width="13" height="10" fill="#868686"/><rect x="1" y="0" width="6" height="3" fill="#868686"/><rect x="1" y="3" width="12" height="8" fill="url(#dith)"/><rect x="2" y="1" width="4" height="2" fill="url(#dith)"/><rect x="12" y="3" width="1" height="8" fill="#c8c8a0"/><rect x="1" y="10" width="12" height="1" fill="#c8c8a0"/></g></svg><span class="t" style="left:56.30px;top:21px;font-size:12px;transform:scaleX(0.9577);">ΤΕΥΧΟΣ ΥΠΟΛΟΓΙΣΜΟΥ ΑΜΟΙΒΩΝ</span><div style="position:absolute;left:12px;top:46px;width:10px;height:1px;background:repeating-linear-gradient(90deg,#8c8c8c 0 1px,transparent 1px 2px)"></div><svg style="position:absolute;left:7px;top:42px" width="9" height="9" viewBox="0 0 9 9"><rect x="0.5" y="0.5" width="8" height="8" rx="1" fill="#fff" stroke="#919191"/><rect x="1" y="5" width="7" height="3" fill="#e6e6e6"/><path d="M2 4.5 H7" stroke="#27408f" stroke-width="1.25"/></svg><div style="position:absolute;left:22px;top:38px;width:13px;height:13px;box-sizing:border-box;border:1px solid #6e6e6e;border-radius:3px;background:#f3f3f3;box-shadow:inset 0 0 0 0.5px #bdbdbd"></div><svg style="position:absolute;left:36px;top:38px" width="16" height="13" viewBox="0 0 16 13"><g shape-rendering="crispEdges"><rect x="13" y="3" width="2" height="10" fill="#000"/><rect x="2" y="11" width="13" height="2" fill="#000"/><rect x="1" y="2" width="12" height="4" fill="#868686"/><rect x="2" y="0" width="6" height="3" fill="#868686"/><rect x="2" y="3" width="10" height="3" fill="url(#dith)"/><rect x="3" y="1" width="4" height="2" fill="url(#dith)"/></g><path d="M0 6 H11.5 L14.5 12 H2.5 Z" fill="#868686"/><path d="M1.2 7 H11 L13.2 11.2 H3.2 Z" fill="url(#dith)"/><path d="M0.5 6.2 H11.2" stroke="#fff" stroke-width="1"/><path d="M11.4 6 L14.6 12.4" stroke="#000" stroke-width="1.4"/></svg><span class="t" style="left:55.34px;top:39px;font-size:12px;transform:scaleX(0.9615);">ΦΟΡΟΛΟΓΙΚΑ</span><div style="position:absolute;left:31px;top:64px;width:10px;height:1px;background:repeating-linear-gradient(90deg,#8c8c8c 0 1px,transparent 1px 2px)"></div><div style="position:absolute;left:41px;top:56px;width:13px;height:13px;box-sizing:border-box;border:1px solid #6e6e6e;border-radius:3px;background:#f3f3f3;box-shadow:inset 0 0 0 0.5px #bdbdbd"></div><svg style="position:absolute;left:56px;top:55px" width="13" height="16" viewBox="0 0 13 16"><path d="M0.5 0.5 H9.5 L12.5 3.5 V15.5 H0.5 Z" fill="#fff" stroke="#000" stroke-width="1"/><path d="M9.5 0.5 V3.5 H12.5" fill="none" stroke="#000" stroke-width="1"/><g shape-rendering="crispEdges"><rect x="3" y="4" width="5" height="1"/><rect x="3" y="6" width="7" height="1"/><rect x="3" y="8" width="7" height="1"/><rect x="3" y="10" width="7" height="1"/><rect x="3" y="12" width="7" height="1"/></g></svg><span class="t" style="left:74.45px;top:57px;font-size:12px;transform:scaleX(0.9515);">ΣΗΜΕΙΩΜΑ ΚΑΤΑΘΕΣΗΣ ΕΙΣΦΟΡΩΝ</span><div style="position:absolute;left:31px;top:82px;width:10px;height:1px;background:repeating-linear-gradient(90deg,#8c8c8c 0 1px,transparent 1px 2px)"></div><div style="position:absolute;left:41px;top:74px;width:13px;height:13px;box-sizing:border-box;border:1px solid #6e6e6e;border-radius:3px;background:#f3f3f3;box-shadow:inset 0 0 0 0.5px #bdbdbd"></div><svg style="position:absolute;left:56px;top:73px" width="13" height="16" viewBox="0 0 13 16"><path d="M0.5 0.5 H9.5 L12.5 3.5 V15.5 H0.5 Z" fill="#fff" stroke="#000" stroke-width="1"/><path d="M9.5 0.5 V3.5 H12.5" fill="none" stroke="#000" stroke-width="1"/><g shape-rendering="crispEdges"><rect x="3" y="4" width="5" height="1"/><rect x="3" y="6" width="7" height="1"/><rect x="3" y="8" width="7" height="1"/><rect x="3" y="10" width="7" height="1"/><rect x="3" y="12" width="7" height="1"/></g></svg><span class="t" style="left:75.40px;top:75px;font-size:12px;transform:scaleX(0.9496);">ΤΡΙΠΛΟΤΥΠΟ ΚΑΤΑΘΕΣΗΣ ΕΙΣΦΟΡΩΝ Έγχρωμο</span><div style="position:absolute;left:31px;top:100px;width:10px;height:1px;background:repeating-linear-gradient(90deg,#8c8c8c 0 1px,transparent 1px 2px)"></div><div style="position:absolute;left:41px;top:92px;width:13px;height:13px;box-sizing:border-box;border:1px solid #6e6e6e;border-radius:3px;background:#f3f3f3;box-shadow:inset 0 0 0 0.5px #bdbdbd"></div><svg style="position:absolute;left:56px;top:91px" width="13" height="16" viewBox="0 0 13 16"><path d="M0.5 0.5 H9.5 L12.5 3.5 V15.5 H0.5 Z" fill="#fff" stroke="#000" stroke-width="1"/><path d="M9.5 0.5 V3.5 H12.5" fill="none" stroke="#000" stroke-width="1"/><g shape-rendering="crispEdges"><rect x="3" y="4" width="5" height="1"/><rect x="3" y="6" width="7" height="1"/><rect x="3" y="8" width="7" height="1"/><rect x="3" y="10" width="7" height="1"/><rect x="3" y="12" width="7" height="1"/></g></svg><div style="position:absolute;left:72.90000000000009px;top:90px;width:277.1999999999998px;height:18px;background:#ececec"></div><span class="t" style="left:75.40px;top:93px;font-size:12px;transform:scaleX(0.9549);">Α3 - ΣΗΜΕΙΩΜΑ ΚΑΤΑΘΕΣΗΣ ΕΙΣΦΟΡΩΝ Έγχρωμο</span><div style="position:absolute;left:31px;top:118px;width:10px;height:1px;background:repeating-linear-gradient(90deg,#8c8c8c 0 1px,transparent 1px 2px)"></div><div style="position:absolute;left:41px;top:110px;width:13px;height:13px;box-sizing:border-box;border:1px solid #6e6e6e;border-radius:3px;background:#f3f3f3;box-shadow:inset 0 0 0 0.5px #bdbdbd"></div><svg style="position:absolute;left:56px;top:109px" width="13" height="16" viewBox="0 0 13 16"><path d="M0.5 0.5 H9.5 L12.5 3.5 V15.5 H0.5 Z" fill="#fff" stroke="#000" stroke-width="1"/><path d="M9.5 0.5 V3.5 H12.5" fill="none" stroke="#000" stroke-width="1"/><g shape-rendering="crispEdges"><rect x="3" y="4" width="5" height="1"/><rect x="3" y="6" width="7" height="1"/><rect x="3" y="8" width="7" height="1"/><rect x="3" y="10" width="7" height="1"/><rect x="3" y="12" width="7" height="1"/></g></svg><span class="t" style="left:75.40px;top:111px;font-size:12px;transform:scaleX(0.9276);">ΤΣΜΕΔΕ ΙΔΙΟΚΤΗΤΗ - ΕΝΤΥΠΟ ΕΤΕ</span><div style="position:absolute;left:31px;top:136px;width:10px;height:1px;background:repeating-linear-gradient(90deg,#8c8c8c 0 1px,transparent 1px 2px)"></div><div style="position:absolute;left:41px;top:128px;width:13px;height:13px;box-sizing:border-box;border:1px solid #6e6e6e;border-radius:3px;background:#f3f3f3;box-shadow:inset 0 0 0 0.5px #bdbdbd"></div><svg style="position:absolute;left:56px;top:127px" width="13" height="16" viewBox="0 0 13 16"><path d="M0.5 0.5 H9.5 L12.5 3.5 V15.5 H0.5 Z" fill="#fff" stroke="#000" stroke-width="1"/><path d="M9.5 0.5 V3.5 H12.5" fill="none" stroke="#000" stroke-width="1"/><g shape-rendering="crispEdges"><rect x="3" y="4" width="5" height="1"/><rect x="3" y="6" width="7" height="1"/><rect x="3" y="8" width="7" height="1"/><rect x="3" y="10" width="7" height="1"/><rect x="3" y="12" width="7" height="1"/></g></svg><span class="t" style="left:75.40px;top:129px;font-size:12px;transform:scaleX(0.9338);">ΤΣΜΕΔΕ ΜΗΧΑΝΙΚΟΥ - ΕΝΤΥΠΟ ΕΤΕ</span><div style="position:absolute;left:31px;top:154px;width:10px;height:1px;background:repeating-linear-gradient(90deg,#8c8c8c 0 1px,transparent 1px 2px)"></div><div style="position:absolute;left:41px;top:146px;width:13px;height:13px;box-sizing:border-box;border:1px solid #6e6e6e;border-radius:3px;background:#f3f3f3;box-shadow:inset 0 0 0 0.5px #bdbdbd"></div><svg style="position:absolute;left:56px;top:145px" width="13" height="16" viewBox="0 0 13 16"><path d="M0.5 0.5 H9.5 L12.5 3.5 V15.5 H0.5 Z" fill="#fff" stroke="#000" stroke-width="1"/><path d="M9.5 0.5 V3.5 H12.5" fill="none" stroke="#000" stroke-width="1"/><g shape-rendering="crispEdges"><rect x="3" y="4" width="5" height="1"/><rect x="3" y="6" width="7" height="1"/><rect x="3" y="8" width="7" height="1"/><rect x="3" y="10" width="7" height="1"/><rect x="3" y="12" width="7" height="1"/></g></svg><span class="t" style="left:75.40px;top:147px;font-size:12px;transform:scaleX(0.9423);">ΑΜΟΙΒΕΣ ΜΗΧΑΝΙΚΟΥ - ΕΝΤΥΠΟ ΕΤΕ</span><div style="position:absolute;left:31px;top:172px;width:10px;height:1px;background:repeating-linear-gradient(90deg,#8c8c8c 0 1px,transparent 1px 2px)"></div><div style="position:absolute;left:41px;top:164px;width:13px;height:13px;box-sizing:border-box;border:1px solid #6e6e6e;border-radius:3px;background:#f3f3f3;box-shadow:inset 0 0 0 0.5px #bdbdbd"></div><svg style="position:absolute;left:56px;top:163px" width="13" height="16" viewBox="0 0 13 16"><path d="M0.5 0.5 H9.5 L12.5 3.5 V15.5 H0.5 Z" fill="#fff" stroke="#000" stroke-width="1"/><path d="M9.5 0.5 V3.5 H12.5" fill="none" stroke="#000" stroke-width="1"/><g shape-rendering="crispEdges"><rect x="3" y="4" width="5" height="1"/><rect x="3" y="6" width="7" height="1"/><rect x="3" y="8" width="7" height="1"/><rect x="3" y="10" width="7" height="1"/><rect x="3" y="12" width="7" height="1"/></g></svg><span class="t" style="left:74.46px;top:165px;font-size:12px;transform:scaleX(0.9352);">ΕΤΑΑ - ΤΣΜΕΔΕ ΙΔΙΟΚΤΗΤΗ ΕΤΕ</span><div style="position:absolute;left:31px;top:190px;width:10px;height:1px;background:repeating-linear-gradient(90deg,#8c8c8c 0 1px,transparent 1px 2px)"></div><div style="position:absolute;left:41px;top:182px;width:13px;height:13px;box-sizing:border-box;border:1px solid #6e6e6e;border-radius:3px;background:#f3f3f3;box-shadow:inset 0 0 0 0.5px #bdbdbd"></div><svg style="position:absolute;left:56px;top:181px" width="13" height="16" viewBox="0 0 13 16"><path d="M0.5 0.5 H9.5 L12.5 3.5 V15.5 H0.5 Z" fill="#fff" stroke="#000" stroke-width="1"/><path d="M9.5 0.5 V3.5 H12.5" fill="none" stroke="#000" stroke-width="1"/><g shape-rendering="crispEdges"><rect x="3" y="4" width="5" height="1"/><rect x="3" y="6" width="7" height="1"/><rect x="3" y="8" width="7" height="1"/><rect x="3" y="10" width="7" height="1"/><rect x="3" y="12" width="7" height="1"/></g></svg><span class="t" style="left:74.44px;top:183px;font-size:12px;transform:scaleX(0.9610);">ΕΤΑΑ - ΤΣΜΕΔΕ ΙΔΙΟΚΤΗΤΗ ΤΡΑΠΕΖΑ ΑΤΤΙΚΗΣ</span><div style="position:absolute;left:31px;top:208px;width:10px;height:1px;background:repeating-linear-gradient(90deg,#8c8c8c 0 1px,transparent 1px 2px)"></div><div style="position:absolute;left:41px;top:200px;width:13px;height:13px;box-sizing:border-box;border:1px solid #6e6e6e;border-radius:3px;background:#f3f3f3;box-shadow:inset 0 0 0 0.5px #bdbdbd"></div><svg style="position:absolute;left:56px;top:199px" width="13" height="16" viewBox="0 0 13 16"><path d="M0.5 0.5 H9.5 L12.5 3.5 V15.5 H0.5 Z" fill="#fff" stroke="#000" stroke-width="1"/><path d="M9.5 0.5 V3.5 H12.5" fill="none" stroke="#000" stroke-width="1"/><g shape-rendering="crispEdges"><rect x="3" y="4" width="5" height="1"/><rect x="3" y="6" width="7" height="1"/><rect x="3" y="8" width="7" height="1"/><rect x="3" y="10" width="7" height="1"/><rect x="3" y="12" width="7" height="1"/></g></svg><span class="t" style="left:74.46px;top:201px;font-size:12px;transform:scaleX(0.9434);">ΕΤΑΑ - ΤΣΜΕΔΕ ΜΗΧΑΝΙΚΟΥ ΕΤΕ</span><div style="position:absolute;left:31px;top:226px;width:10px;height:1px;background:repeating-linear-gradient(90deg,#8c8c8c 0 1px,transparent 1px 2px)"></div><div style="position:absolute;left:41px;top:218px;width:13px;height:13px;box-sizing:border-box;border:1px solid #6e6e6e;border-radius:3px;background:#f3f3f3;box-shadow:inset 0 0 0 0.5px #bdbdbd"></div><svg style="position:absolute;left:56px;top:217px" width="13" height="16" viewBox="0 0 13 16"><path d="M0.5 0.5 H9.5 L12.5 3.5 V15.5 H0.5 Z" fill="#fff" stroke="#000" stroke-width="1"/><path d="M9.5 0.5 V3.5 H12.5" fill="none" stroke="#000" stroke-width="1"/><g shape-rendering="crispEdges"><rect x="3" y="4" width="5" height="1"/><rect x="3" y="6" width="7" height="1"/><rect x="3" y="8" width="7" height="1"/><rect x="3" y="10" width="7" height="1"/><rect x="3" y="12" width="7" height="1"/></g></svg><span class="t" style="left:74.44px;top:219px;font-size:12px;transform:scaleX(0.9649);">ΕΤΑΑ - ΤΣΜΕΔΕ ΜΗΧΑΝΙΚΟΥ ΤΡΑΠΕΖΑ ΑΤΤΙΚΗΣ</span><div style="position:absolute;left:31px;top:244px;width:10px;height:1px;background:repeating-linear-gradient(90deg,#8c8c8c 0 1px,transparent 1px 2px)"></div><div style="position:absolute;left:41px;top:236px;width:13px;height:13px;box-sizing:border-box;border:1px solid #6e6e6e;border-radius:3px;background:#f3f3f3;box-shadow:inset 0 0 0 0.5px #bdbdbd"></div><svg style="position:absolute;left:56px;top:235px" width="13" height="16" viewBox="0 0 13 16"><path d="M0.5 0.5 H9.5 L12.5 3.5 V15.5 H0.5 Z" fill="#fff" stroke="#000" stroke-width="1"/><path d="M9.5 0.5 V3.5 H12.5" fill="none" stroke="#000" stroke-width="1"/><g shape-rendering="crispEdges"><rect x="3" y="4" width="5" height="1"/><rect x="3" y="6" width="7" height="1"/><rect x="3" y="8" width="7" height="1"/><rect x="3" y="10" width="7" height="1"/><rect x="3" y="12" width="7" height="1"/></g></svg><span class="t" style="left:74.47px;top:237px;font-size:12px;transform:scaleX(0.9271);">ΕΤΑΑ - ΤΣΜΕΔΕ 0,6 ΤΗΣ ΧΙΛΙΟΙΣ - ΕΤΕ</span><div style="position:absolute;left:31px;top:262px;width:10px;height:1px;background:repeating-linear-gradient(90deg,#8c8c8c 0 1px,transparent 1px 2px)"></div><div style="position:absolute;left:41px;top:254px;width:13px;height:13px;box-sizing:border-box;border:1px solid #6e6e6e;border-radius:3px;background:#f3f3f3;box-shadow:inset 0 0 0 0.5px #bdbdbd"></div><svg style="position:absolute;left:56px;top:253px" width="13" height="16" viewBox="0 0 13 16"><path d="M0.5 0.5 H9.5 L12.5 3.5 V15.5 H0.5 Z" fill="#fff" stroke="#000" stroke-width="1"/><path d="M9.5 0.5 V3.5 H12.5" fill="none" stroke="#000" stroke-width="1"/><g shape-rendering="crispEdges"><rect x="3" y="4" width="5" height="1"/><rect x="3" y="6" width="7" height="1"/><rect x="3" y="8" width="7" height="1"/><rect x="3" y="10" width="7" height="1"/><rect x="3" y="12" width="7" height="1"/></g></svg><span class="t" style="left:74.43px;top:255px;font-size:12px;transform:scaleX(0.9704);">ΦΕΜ σελίδα 1 (v1)</span><div style="position:absolute;left:31px;top:280px;width:10px;height:1px;background:repeating-linear-gradient(90deg,#8c8c8c 0 1px,transparent 1px 2px)"></div><div style="position:absolute;left:41px;top:272px;width:13px;height:13px;box-sizing:border-box;border:1px solid #6e6e6e;border-radius:3px;background:#f3f3f3;box-shadow:inset 0 0 0 0.5px #bdbdbd"></div><svg style="position:absolute;left:56px;top:271px" width="13" height="16" viewBox="0 0 13 16"><path d="M0.5 0.5 H9.5 L12.5 3.5 V15.5 H0.5 Z" fill="#fff" stroke="#000" stroke-width="1"/><path d="M9.5 0.5 V3.5 H12.5" fill="none" stroke="#000" stroke-width="1"/><g shape-rendering="crispEdges"><rect x="3" y="4" width="5" height="1"/><rect x="3" y="6" width="7" height="1"/><rect x="3" y="8" width="7" height="1"/><rect x="3" y="10" width="7" height="1"/><rect x="3" y="12" width="7" height="1"/></g></svg><span class="t" style="left:74.43px;top:273px;font-size:12px;transform:scaleX(0.9704);">ΦΕΜ σελίδα 2 (v1)</span><div style="position:absolute;left:31px;top:298px;width:10px;height:1px;background:repeating-linear-gradient(90deg,#8c8c8c 0 1px,transparent 1px 2px)"></div><div style="position:absolute;left:41px;top:290px;width:13px;height:13px;box-sizing:border-box;border:1px solid #6e6e6e;border-radius:3px;background:#f3f3f3;box-shadow:inset 0 0 0 0.5px #bdbdbd"></div><svg style="position:absolute;left:56px;top:289px" width="13" height="16" viewBox="0 0 13 16"><path d="M0.5 0.5 H9.5 L12.5 3.5 V15.5 H0.5 Z" fill="#fff" stroke="#000" stroke-width="1"/><path d="M9.5 0.5 V3.5 H12.5" fill="none" stroke="#000" stroke-width="1"/><g shape-rendering="crispEdges"><rect x="3" y="4" width="5" height="1"/><rect x="3" y="6" width="7" height="1"/><rect x="3" y="8" width="7" height="1"/><rect x="3" y="10" width="7" height="1"/><rect x="3" y="12" width="7" height="1"/></g></svg><span class="t" style="left:74.43px;top:291px;font-size:12px;transform:scaleX(0.9704);">ΦΕΜ σελιδα 1 (v2)</span><div style="position:absolute;left:31px;top:316px;width:10px;height:1px;background:repeating-linear-gradient(90deg,#8c8c8c 0 1px,transparent 1px 2px)"></div><div style="position:absolute;left:41px;top:308px;width:13px;height:13px;box-sizing:border-box;border:1px solid #6e6e6e;border-radius:3px;background:#f3f3f3;box-shadow:inset 0 0 0 0.5px #bdbdbd"></div><svg style="position:absolute;left:56px;top:307px" width="13" height="16" viewBox="0 0 13 16"><path d="M0.5 0.5 H9.5 L12.5 3.5 V15.5 H0.5 Z" fill="#fff" stroke="#000" stroke-width="1"/><path d="M9.5 0.5 V3.5 H12.5" fill="none" stroke="#000" stroke-width="1"/><g shape-rendering="crispEdges"><rect x="3" y="4" width="5" height="1"/><rect x="3" y="6" width="7" height="1"/><rect x="3" y="8" width="7" height="1"/><rect x="3" y="10" width="7" height="1"/><rect x="3" y="12" width="7" height="1"/></g></svg><span class="t" style="left:74.43px;top:309px;font-size:12px;transform:scaleX(0.9704);">ΦΕΜ σελιδα 2 (v2)</span><div style="position:absolute;left:12px;top:334px;width:10px;height:1px;background:repeating-linear-gradient(90deg,#8c8c8c 0 1px,transparent 1px 2px)"></div><svg style="position:absolute;left:7px;top:330px" width="9" height="9" viewBox="0 0 9 9"><rect x="0.5" y="0.5" width="8" height="8" rx="1" fill="#fff" stroke="#919191"/><rect x="1" y="5" width="7" height="3" fill="#e6e6e6"/><path d="M2 4.5 H7" stroke="#27408f" stroke-width="1.25"/></svg><div style="position:absolute;left:22px;top:326px;width:13px;height:13px;box-sizing:border-box;border:1px solid #6e6e6e;border-radius:3px;background:#f3f3f3;box-shadow:inset 0 0 0 0.5px #bdbdbd"></div><svg style="position:absolute;left:36px;top:326px" width="16" height="13" viewBox="0 0 16 13"><g shape-rendering="crispEdges"><rect x="13" y="3" width="2" height="10" fill="#000"/><rect x="2" y="11" width="13" height="2" fill="#000"/><rect x="1" y="2" width="12" height="4" fill="#868686"/><rect x="2" y="0" width="6" height="3" fill="#868686"/><rect x="2" y="3" width="10" height="3" fill="url(#dith)"/><rect x="3" y="1" width="4" height="2" fill="url(#dith)"/></g><path d="M0 6 H11.5 L14.5 12 H2.5 Z" fill="#868686"/><path d="M1.2 7 H11 L13.2 11.2 H3.2 Z" fill="url(#dith)"/><path d="M0.5 6.2 H11.2" stroke="#fff" stroke-width="1"/><path d="M11.4 6 L14.6 12.4" stroke="#000" stroke-width="1.4"/></svg><span class="t" style="left:55.35px;top:327px;font-size:12px;transform:scaleX(0.9457);">ΒΑΣΙΚΑ ΕΝΤΥΠΑ ΓΙΑ ΤΗΝ ΕΚΔΟΣΗ ΤΗΣ ΑΔΕΙΑΣ</span><div style="position:absolute;left:31px;top:352px;width:10px;height:1px;background:repeating-linear-gradient(90deg,#8c8c8c 0 1px,transparent 1px 2px)"></div><div style="position:absolute;left:41px;top:344px;width:13px;height:13px;box-sizing:border-box;border:1px solid #6e6e6e;border-radius:3px;background:#f3f3f3;box-shadow:inset 0 0 0 0.5px #bdbdbd"></div><svg style="position:absolute;left:56px;top:343px" width="13" height="16" viewBox="0 0 13 16"><path d="M0.5 0.5 H9.5 L12.5 3.5 V15.5 H0.5 Z" fill="#fff" stroke="#000" stroke-width="1"/><path d="M9.5 0.5 V3.5 H12.5" fill="none" stroke="#000" stroke-width="1"/><g shape-rendering="crispEdges"><rect x="3" y="4" width="5" height="1"/><rect x="3" y="6" width="7" height="1"/><rect x="3" y="8" width="7" height="1"/><rect x="3" y="10" width="7" height="1"/><rect x="3" y="12" width="7" height="1"/></g></svg><span class="t" style="left:75.40px;top:345px;font-size:12px;transform:scaleX(0.9450);">ΑΙΤΗΣΗ ΓΙΑ ΕΚΔΟΣΗ ΟΙΚΟΔΟΜΙΚΗΣ ΑΔΕΙΑΣ</span><div style="position:absolute;left:31px;top:370px;width:10px;height:1px;background:repeating-linear-gradient(90deg,#8c8c8c 0 1px,transparent 1px 2px)"></div><div style="position:absolute;left:41px;top:362px;width:13px;height:13px;box-sizing:border-box;border:1px solid #6e6e6e;border-radius:3px;background:#f3f3f3;box-shadow:inset 0 0 0 0.5px #bdbdbd"></div><svg style="position:absolute;left:56px;top:361px" width="13" height="16" viewBox="0 0 13 16"><path d="M0.5 0.5 H9.5 L12.5 3.5 V15.5 H0.5 Z" fill="#fff" stroke="#000" stroke-width="1"/><path d="M9.5 0.5 V3.5 H12.5" fill="none" stroke="#000" stroke-width="1"/><g shape-rendering="crispEdges"><rect x="3" y="4" width="5" height="1"/><rect x="3" y="6" width="7" height="1"/><rect x="3" y="8" width="7" height="1"/><rect x="3" y="10" width="7" height="1"/><rect x="3" y="12" width="7" height="1"/></g></svg><span class="t" style="left:75.40px;top:363px;font-size:12px;transform:scaleX(0.9619);">ΔΗΛΩΣΗ ΑΝΑΘΕΣΕΩΝ</span><div style="position:absolute;left:31px;top:388px;width:10px;height:1px;background:repeating-linear-gradient(90deg,#8c8c8c 0 1px,transparent 1px 2px)"></div><div style="position:absolute;left:41px;top:380px;width:13px;height:13px;box-sizing:border-box;border:1px solid #6e6e6e;border-radius:3px;background:#f3f3f3;box-shadow:inset 0 0 0 0.5px #bdbdbd"></div><svg style="position:absolute;left:56px;top:379px" width="13" height="16" viewBox="0 0 13 16"><path d="M0.5 0.5 H9.5 L12.5 3.5 V15.5 H0.5 Z" fill="#fff" stroke="#000" stroke-width="1"/><path d="M9.5 0.5 V3.5 H12.5" fill="none" stroke="#000" stroke-width="1"/><g shape-rendering="crispEdges"><rect x="3" y="4" width="5" height="1"/><rect x="3" y="6" width="7" height="1"/><rect x="3" y="8" width="7" height="1"/><rect x="3" y="10" width="7" height="1"/><rect x="3" y="12" width="7" height="1"/></g></svg><span class="t" style="left:75.40px;top:381px;font-size:12px;transform:scaleX(0.9848);">ΔΗΛΩΣΗ ΑΝΑΛΗΨΗΣ ΟΜΑΔΙΚΗ</span><div style="position:absolute;left:31px;top:406px;width:10px;height:1px;background:repeating-linear-gradient(90deg,#8c8c8c 0 1px,transparent 1px 2px)"></div><div style="position:absolute;left:41px;top:398px;width:13px;height:13px;box-sizing:border-box;border:1px solid #6e6e6e;border-radius:3px;background:#f3f3f3;box-shadow:inset 0 0 0 0.5px #bdbdbd"></div><svg style="position:absolute;left:56px;top:397px" width="13" height="16" viewBox="0 0 13 16"><path d="M0.5 0.5 H9.5 L12.5 3.5 V15.5 H0.5 Z" fill="#fff" stroke="#000" stroke-width="1"/><path d="M9.5 0.5 V3.5 H12.5" fill="none" stroke="#000" stroke-width="1"/><g shape-rendering="crispEdges"><rect x="3" y="4" width="5" height="1"/><rect x="3" y="6" width="7" height="1"/><rect x="3" y="8" width="7" height="1"/><rect x="3" y="10" width="7" height="1"/><rect x="3" y="12" width="7" height="1"/></g></svg><span class="t" style="left:75.40px;top:399px;font-size:12px;transform:scaleX(0.9675);">ΔΗΛΩΣΗ ΑΝΑΛΗΨΗΣ ΚΑΘΕ ΜΗΧΑΝΙΚΟΥ</span><div style="position:absolute;left:31px;top:424px;width:10px;height:1px;background:repeating-linear-gradient(90deg,#8c8c8c 0 1px,transparent 1px 2px)"></div><div style="position:absolute;left:41px;top:416px;width:13px;height:13px;box-sizing:border-box;border:1px solid #6e6e6e;border-radius:3px;background:#f3f3f3;box-shadow:inset 0 0 0 0.5px #bdbdbd"></div><svg style="position:absolute;left:56px;top:415px" width="13" height="16" viewBox="0 0 13 16"><path d="M0.5 0.5 H9.5 L12.5 3.5 V15.5 H0.5 Z" fill="#fff" stroke="#000" stroke-width="1"/><path d="M9.5 0.5 V3.5 H12.5" fill="none" stroke="#000" stroke-width="1"/><g shape-rendering="crispEdges"><rect x="3" y="4" width="5" height="1"/><rect x="3" y="6" width="7" height="1"/><rect x="3" y="8" width="7" height="1"/><rect x="3" y="10" width="7" height="1"/><rect x="3" y="12" width="7" height="1"/></g></svg><span class="t" style="left:74.47px;top:417px;font-size:12px;transform:scaleX(0.9287);">ΦΥΛΛΟ ΕΛΕΓΧΟΥ ΜΕΛΕΤΗΣ</span><div style="position:absolute;left:31px;top:442px;width:10px;height:1px;background:repeating-linear-gradient(90deg,#8c8c8c 0 1px,transparent 1px 2px)"></div><div style="position:absolute;left:41px;top:434px;width:13px;height:13px;box-sizing:border-box;border:1px solid #6e6e6e;border-radius:3px;background:#f3f3f3;box-shadow:inset 0 0 0 0.5px #bdbdbd"></div><svg style="position:absolute;left:56px;top:433px" width="13" height="16" viewBox="0 0 13 16"><path d="M0.5 0.5 H9.5 L12.5 3.5 V15.5 H0.5 Z" fill="#fff" stroke="#000" stroke-width="1"/><path d="M9.5 0.5 V3.5 H12.5" fill="none" stroke="#000" stroke-width="1"/><g shape-rendering="crispEdges"><rect x="3" y="4" width="5" height="1"/><rect x="3" y="6" width="7" height="1"/><rect x="3" y="8" width="7" height="1"/><rect x="3" y="10" width="7" height="1"/><rect x="3" y="12" width="7" height="1"/></g></svg><span class="t" style="left:75.40px;top:435px;font-size:12px;transform:scaleX(0.8990);">ΤΕΧΝΙΚΗ ΕΚΘΕΣΗ</span><div style="position:absolute;left:31px;top:460px;width:10px;height:1px;background:repeating-linear-gradient(90deg,#8c8c8c 0 1px,transparent 1px 2px)"></div><div style="position:absolute;left:41px;top:452px;width:13px;height:13px;box-sizing:border-box;border:1px solid #6e6e6e;border-radius:3px;background:#f3f3f3;box-shadow:inset 0 0 0 0.5px #bdbdbd"></div><svg style="position:absolute;left:56px;top:451px" width="13" height="16" viewBox="0 0 13 16"><path d="M0.5 0.5 H9.5 L12.5 3.5 V15.5 H0.5 Z" fill="#fff" stroke="#000" stroke-width="1"/><path d="M9.5 0.5 V3.5 H12.5" fill="none" stroke="#000" stroke-width="1"/><g shape-rendering="crispEdges"><rect x="3" y="4" width="5" height="1"/><rect x="3" y="6" width="7" height="1"/><rect x="3" y="8" width="7" height="1"/><rect x="3" y="10" width="7" height="1"/><rect x="3" y="12" width="7" height="1"/></g></svg><span class="t" style="left:75.40px;top:453px;font-size:12px;transform:scaleX(0.9625);">ΧΡΟΝΙΚΟΣ ΠΡΟΓΡΑΜΜΑΤΙΣΜΟΣ</span><div style="position:absolute;left:31px;top:478px;width:10px;height:1px;background:repeating-linear-gradient(90deg,#8c8c8c 0 1px,transparent 1px 2px)"></div><div style="position:absolute;left:41px;top:470px;width:13px;height:13px;box-sizing:border-box;border:1px solid #6e6e6e;border-radius:3px;background:#f3f3f3;box-shadow:inset 0 0 0 0.5px #bdbdbd"></div><svg style="position:absolute;left:56px;top:469px" width="13" height="16" viewBox="0 0 13 16"><path d="M0.5 0.5 H9.5 L12.5 3.5 V15.5 H0.5 Z" fill="#fff" stroke="#000" stroke-width="1"/><path d="M9.5 0.5 V3.5 H12.5" fill="none" stroke="#000" stroke-width="1"/><g shape-rendering="crispEdges"><rect x="3" y="4" width="5" height="1"/><rect x="3" y="6" width="7" height="1"/><rect x="3" y="8" width="7" height="1"/><rect x="3" y="10" width="7" height="1"/><rect x="3" y="12" width="7" height="1"/></g></svg><span class="t" style="left:74.46px;top:471px;font-size:12px;transform:scaleX(0.9438);">ΠΛΗΡΟΦΟΡΙΑΚΑ ΣΤΟΙΧΕΙΑ</span><div style="position:absolute;left:31px;top:496px;width:10px;height:1px;background:repeating-linear-gradient(90deg,#8c8c8c 0 1px,transparent 1px 2px)"></div><div style="position:absolute;left:41px;top:488px;width:13px;height:13px;box-sizing:border-box;border:1px solid #6e6e6e;border-radius:3px;background:#f3f3f3;box-shadow:inset 0 0 0 0.5px #bdbdbd"></div><svg style="position:absolute;left:56px;top:487px" width="13" height="16" viewBox="0 0 13 16"><path d="M0.5 0.5 H9.5 L12.5 3.5 V15.5 H0.5 Z" fill="#fff" stroke="#000" stroke-width="1"/><path d="M9.5 0.5 V3.5 H12.5" fill="none" stroke="#000" stroke-width="1"/><g shape-rendering="crispEdges"><rect x="3" y="4" width="5" height="1"/><rect x="3" y="6" width="7" height="1"/><rect x="3" y="8" width="7" height="1"/><rect x="3" y="10" width="7" height="1"/><rect x="3" y="12" width="7" height="1"/></g></svg><span class="t" style="left:74.45px;top:489px;font-size:12px;transform:scaleX(0.9541);">ΣΤΑΤΙΣΤΙΚΟ ΔΕΛΤΙΟ</span><div style="position:absolute;left:12px;top:514px;width:10px;height:1px;background:repeating-linear-gradient(90deg,#8c8c8c 0 1px,transparent 1px 2px)"></div><svg style="position:absolute;left:7px;top:510px" width="9" height="9" viewBox="0 0 9 9"><rect x="0.5" y="0.5" width="8" height="8" rx="1" fill="#fff" stroke="#919191"/><rect x="1" y="5" width="7" height="3" fill="#e6e6e6"/><path d="M2 4.5 H7 M4.5 2 V7" stroke="#27408f" stroke-width="1.25"/></svg><div style="position:absolute;left:22px;top:506px;width:13px;height:13px;box-sizing:border-box;border:1px solid #6e6e6e;border-radius:3px;background:#f3f3f3;box-shadow:inset 0 0 0 0.5px #bdbdbd"></div><svg style="position:absolute;left:36px;top:506px" width="15" height="13" viewBox="0 0 15 13"><g shape-rendering="crispEdges"><rect x="1" y="11" width="13.5" height="1.5" fill="#000"/><rect x="13" y="3" width="1.5" height="9.5" fill="#000"/><rect x="0" y="2" width="13" height="10" fill="#868686"/><rect x="1" y="0" width="6" height="3" fill="#868686"/><rect x="1" y="3" width="12" height="8" fill="url(#dith)"/><rect x="2" y="1" width="4" height="2" fill="url(#dith)"/><rect x="12" y="3" width="1" height="8" fill="#c8c8a0"/><rect x="1" y="10" width="12" height="1" fill="#c8c8a0"/></g></svg><span class="t" style="left:56.30px;top:507px;font-size:12px;transform:scaleX(0.9565);">ΤΟΠΟΓΡΑΦΙΚΑ</span><div style="position:absolute;left:12px;top:532px;width:10px;height:1px;background:repeating-linear-gradient(90deg,#8c8c8c 0 1px,transparent 1px 2px)"></div><svg style="position:absolute;left:7px;top:528px" width="9" height="9" viewBox="0 0 9 9"><rect x="0.5" y="0.5" width="8" height="8" rx="1" fill="#fff" stroke="#919191"/><rect x="1" y="5" width="7" height="3" fill="#e6e6e6"/><path d="M2 4.5 H7 M4.5 2 V7" stroke="#27408f" stroke-width="1.25"/></svg><div style="position:absolute;left:22px;top:524px;width:13px;height:13px;box-sizing:border-box;border:1px solid #6e6e6e;border-radius:3px;background:#f3f3f3;box-shadow:inset 0 0 0 0.5px #bdbdbd"></div><svg style="position:absolute;left:36px;top:524px" width="15" height="13" viewBox="0 0 15 13"><g shape-rendering="crispEdges"><rect x="1" y="11" width="13.5" height="1.5" fill="#000"/><rect x="13" y="3" width="1.5" height="9.5" fill="#000"/><rect x="0" y="2" width="13" height="10" fill="#868686"/><rect x="1" y="0" width="6" height="3" fill="#868686"/><rect x="1" y="3" width="12" height="8" fill="url(#dith)"/><rect x="2" y="1" width="4" height="2" fill="url(#dith)"/><rect x="12" y="3" width="1" height="8" fill="#c8c8a0"/><rect x="1" y="10" width="12" height="1" fill="#c8c8a0"/></g></svg><span class="t" style="left:55.33px;top:525px;font-size:12px;transform:scaleX(0.9671);">Σ.Α.Υ - Φ.Α.Υ.</span><div style="position:absolute;left:12px;top:550px;width:10px;height:1px;background:repeating-linear-gradient(90deg,#8c8c8c 0 1px,transparent 1px 2px)"></div><svg style="position:absolute;left:7px;top:546px" width="9" height="9" viewBox="0 0 9 9"><rect x="0.5" y="0.5" width="8" height="8" rx="1" fill="#fff" stroke="#919191"/><rect x="1" y="5" width="7" height="3" fill="#e6e6e6"/><path d="M2 4.5 H7 M4.5 2 V7" stroke="#27408f" stroke-width="1.25"/></svg><div style="position:absolute;left:22px;top:542px;width:13px;height:13px;box-sizing:border-box;border:1px solid #6e6e6e;border-radius:3px;background:#f3f3f3;box-shadow:inset 0 0 0 0.5px #bdbdbd"></div><svg style="position:absolute;left:36px;top:542px" width="15" height="13" viewBox="0 0 15 13"><g shape-rendering="crispEdges"><rect x="1" y="11" width="13.5" height="1.5" fill="#000"/><rect x="13" y="3" width="1.5" height="9.5" fill="#000"/><rect x="0" y="2" width="13" height="10" fill="#868686"/><rect x="1" y="0" width="6" height="3" fill="#868686"/><rect x="1" y="3" width="12" height="8" fill="url(#dith)"/><rect x="2" y="1" width="4" height="2" fill="url(#dith)"/><rect x="12" y="3" width="1" height="8" fill="#c8c8a0"/><rect x="1" y="10" width="12" height="1" fill="#c8c8a0"/></g></svg><span class="t" style="left:55.30px;top:543px;font-size:12px;">Ι.Κ.Α.</span><div style="position:absolute;left:12px;top:568px;width:10px;height:1px;background:repeating-linear-gradient(90deg,#8c8c8c 0 1px,transparent 1px 2px)"></div><svg style="position:absolute;left:7px;top:564px" width="9" height="9" viewBox="0 0 9 9"><rect x="0.5" y="0.5" width="8" height="8" rx="1" fill="#fff" stroke="#919191"/><rect x="1" y="5" width="7" height="3" fill="#e6e6e6"/><path d="M2 4.5 H7 M4.5 2 V7" stroke="#27408f" stroke-width="1.25"/></svg><div style="position:absolute;left:22px;top:560px;width:13px;height:13px;box-sizing:border-box;border:1px solid #6e6e6e;border-radius:3px;background:#f3f3f3;box-shadow:inset 0 0 0 0.5px #bdbdbd"></div><svg style="position:absolute;left:36px;top:560px" width="15" height="13" viewBox="0 0 15 13"><g shape-rendering="crispEdges"><rect x="1" y="11" width="13.5" height="1.5" fill="#000"/><rect x="13" y="3" width="1.5" height="9.5" fill="#000"/><rect x="0" y="2" width="13" height="10" fill="#868686"/><rect x="1" y="0" width="6" height="3" fill="#868686"/><rect x="1" y="3" width="12" height="8" fill="url(#dith)"/><rect x="2" y="1" width="4" height="2" fill="url(#dith)"/><rect x="12" y="3" width="1" height="8" fill="#c8c8a0"/><rect x="1" y="10" width="12" height="1" fill="#c8c8a0"/></g></svg><span class="t" style="left:56.30px;top:561px;font-size:12px;transform:scaleX(0.9120);">ΑΙΤΗΣΕΙΣ ΔΙΑΦΟΡΕΣ</span><div style="position:absolute;left:12px;top:586px;width:10px;height:1px;background:repeating-linear-gradient(90deg,#8c8c8c 0 1px,transparent 1px 2px)"></div><svg style="position:absolute;left:7px;top:582px" width="9" height="9" viewBox="0 0 9 9"><rect x="0.5" y="0.5" width="8" height="8" rx="1" fill="#fff" stroke="#919191"/><rect x="1" y="5" width="7" height="3" fill="#e6e6e6"/><path d="M2 4.5 H7 M4.5 2 V7" stroke="#27408f" stroke-width="1.25"/></svg><div style="position:absolute;left:22px;top:578px;width:13px;height:13px;box-sizing:border-box;border:1px solid #6e6e6e;border-radius:3px;background:#f3f3f3;box-shadow:inset 0 0 0 0.5px #bdbdbd"></div><svg style="position:absolute;left:36px;top:578px" width="15" height="13" viewBox="0 0 15 13"><g shape-rendering="crispEdges"><rect x="1" y="11" width="13.5" height="1.5" fill="#000"/><rect x="13" y="3" width="1.5" height="9.5" fill="#000"/><rect x="0" y="2" width="13" height="10" fill="#868686"/><rect x="1" y="0" width="6" height="3" fill="#868686"/><rect x="1" y="3" width="12" height="8" fill="url(#dith)"/><rect x="2" y="1" width="4" height="2" fill="url(#dith)"/><rect x="12" y="3" width="1" height="8" fill="#c8c8a0"/><rect x="1" y="10" width="12" height="1" fill="#c8c8a0"/></g></svg><span class="t" style="left:56.30px;top:579px;font-size:12px;transform:scaleX(0.9161);">ΔΗΛΩΣΕΙΣ ΔΙΑΦΟΡΕΣ</span><div style="position:absolute;left:12px;top:604px;width:10px;height:1px;background:repeating-linear-gradient(90deg,#8c8c8c 0 1px,transparent 1px 2px)"></div><svg style="position:absolute;left:7px;top:600px" width="9" height="9" viewBox="0 0 9 9"><rect x="0.5" y="0.5" width="8" height="8" rx="1" fill="#fff" stroke="#919191"/><rect x="1" y="5" width="7" height="3" fill="#e6e6e6"/><path d="M2 4.5 H7 M4.5 2 V7" stroke="#27408f" stroke-width="1.25"/></svg><div style="position:absolute;left:22px;top:596px;width:13px;height:13px;box-sizing:border-box;border:1px solid #6e6e6e;border-radius:3px;background:#f3f3f3;box-shadow:inset 0 0 0 0.5px #bdbdbd"></div><svg style="position:absolute;left:36px;top:596px" width="15" height="13" viewBox="0 0 15 13"><g shape-rendering="crispEdges"><rect x="1" y="11" width="13.5" height="1.5" fill="#000"/><rect x="13" y="3" width="1.5" height="9.5" fill="#000"/><rect x="0" y="2" width="13" height="10" fill="#868686"/><rect x="1" y="0" width="6" height="3" fill="#868686"/><rect x="1" y="3" width="12" height="8" fill="url(#dith)"/><rect x="2" y="1" width="4" height="2" fill="url(#dith)"/><rect x="12" y="3" width="1" height="8" fill="#c8c8a0"/><rect x="1" y="10" width="12" height="1" fill="#c8c8a0"/></g></svg><span class="t" style="left:55.42px;top:597px;font-size:12px;transform:scaleX(0.8756);">ΕΙΔΙΚΕΣ ΕΚΤΥΠΩΣΕΙΣ</span><div style="position:absolute;left:12px;top:622px;width:10px;height:1px;background:repeating-linear-gradient(90deg,#8c8c8c 0 1px,transparent 1px 2px)"></div><svg style="position:absolute;left:7px;top:618px" width="9" height="9" viewBox="0 0 9 9"><rect x="0.5" y="0.5" width="8" height="8" rx="1" fill="#fff" stroke="#919191"/><rect x="1" y="5" width="7" height="3" fill="#e6e6e6"/><path d="M2 4.5 H7 M4.5 2 V7" stroke="#27408f" stroke-width="1.25"/></svg><div style="position:absolute;left:22px;top:614px;width:13px;height:13px;box-sizing:border-box;border:1px solid #6e6e6e;border-radius:3px;background:#f3f3f3;box-shadow:inset 0 0 0 0.5px #bdbdbd"></div><svg style="position:absolute;left:36px;top:614px" width="15" height="13" viewBox="0 0 15 13"><g shape-rendering="crispEdges"><rect x="1" y="11" width="13.5" height="1.5" fill="#000"/><rect x="13" y="3" width="1.5" height="9.5" fill="#000"/><rect x="0" y="2" width="13" height="10" fill="#868686"/><rect x="1" y="0" width="6" height="3" fill="#868686"/><rect x="1" y="3" width="12" height="8" fill="url(#dith)"/><rect x="2" y="1" width="4" height="2" fill="url(#dith)"/><rect x="12" y="3" width="1" height="8" fill="#c8c8a0"/><rect x="1" y="10" width="12" height="1" fill="#c8c8a0"/></g></svg><span class="t" style="left:55.38px;top:615px;font-size:12px;transform:scaleX(0.9167);">ΡΥΘΜΙΣΕΙΣ Ν3843</span><div style="position:absolute;left:12px;top:640px;width:10px;height:1px;background:repeating-linear-gradient(90deg,#8c8c8c 0 1px,transparent 1px 2px)"></div><svg style="position:absolute;left:7px;top:636px" width="9" height="9" viewBox="0 0 9 9"><rect x="0.5" y="0.5" width="8" height="8" rx="1" fill="#fff" stroke="#919191"/><rect x="1" y="5" width="7" height="3" fill="#e6e6e6"/><path d="M2 4.5 H7 M4.5 2 V7" stroke="#27408f" stroke-width="1.25"/></svg><div style="position:absolute;left:22px;top:632px;width:13px;height:13px;box-sizing:border-box;border:1px solid #6e6e6e;border-radius:3px;background:#f3f3f3;box-shadow:inset 0 0 0 0.5px #bdbdbd"></div><svg style="position:absolute;left:36px;top:632px" width="15" height="13" viewBox="0 0 15 13"><g shape-rendering="crispEdges"><rect x="1" y="11" width="13.5" height="1.5" fill="#000"/><rect x="13" y="3" width="1.5" height="9.5" fill="#000"/><rect x="0" y="2" width="13" height="10" fill="#868686"/><rect x="1" y="0" width="6" height="3" fill="#868686"/><rect x="1" y="3" width="12" height="8" fill="url(#dith)"/><rect x="2" y="1" width="4" height="2" fill="url(#dith)"/><rect x="12" y="3" width="1" height="8" fill="#c8c8a0"/><rect x="1" y="10" width="12" height="1" fill="#c8c8a0"/></g></svg><span class="t" style="left:56.30px;top:633px;font-size:12px;transform:scaleX(0.9598);">ΑΥΘΑΙΡΕΤΑ Ν4014/2011</span><div style="position:absolute;left:12px;top:658px;width:10px;height:1px;background:repeating-linear-gradient(90deg,#8c8c8c 0 1px,transparent 1px 2px)"></div><svg style="position:absolute;left:7px;top:654px" width="9" height="9" viewBox="0 0 9 9"><rect x="0.5" y="0.5" width="8" height="8" rx="1" fill="#fff" stroke="#919191"/><rect x="1" y="5" width="7" height="3" fill="#e6e6e6"/><path d="M2 4.5 H7 M4.5 2 V7" stroke="#27408f" stroke-width="1.25"/></svg><div style="position:absolute;left:22px;top:650px;width:13px;height:13px;box-sizing:border-box;border:1px solid #6e6e6e;border-radius:3px;background:#f3f3f3;box-shadow:inset 0 0 0 0.5px #bdbdbd"></div><svg style="position:absolute;left:36px;top:650px" width="15" height="13" viewBox="0 0 15 13"><g shape-rendering="crispEdges"><rect x="1" y="11" width="13.5" height="1.5" fill="#000"/><rect x="13" y="3" width="1.5" height="9.5" fill="#000"/><rect x="0" y="2" width="13" height="10" fill="#868686"/><rect x="1" y="0" width="6" height="3" fill="#868686"/><rect x="1" y="3" width="12" height="8" fill="url(#dith)"/><rect x="2" y="1" width="4" height="2" fill="url(#dith)"/><rect x="12" y="3" width="1" height="8" fill="#c8c8a0"/><rect x="1" y="10" width="12" height="1" fill="#c8c8a0"/></g></svg><span class="t" style="left:56.30px;top:651px;font-size:12px;transform:scaleX(0.9586);">ΑΥΘΑΙΡΕΤΑ Ν4178/2013</span><div style="position:absolute;left:12px;top:676px;width:10px;height:1px;background:repeating-linear-gradient(90deg,#8c8c8c 0 1px,transparent 1px 2px)"></div><svg style="position:absolute;left:7px;top:672px" width="9" height="9" viewBox="0 0 9 9"><rect x="0.5" y="0.5" width="8" height="8" rx="1" fill="#fff" stroke="#919191"/><rect x="1" y="5" width="7" height="3" fill="#e6e6e6"/><path d="M2 4.5 H7 M4.5 2 V7" stroke="#27408f" stroke-width="1.25"/></svg><div style="position:absolute;left:22px;top:668px;width:13px;height:13px;box-sizing:border-box;border:1px solid #6e6e6e;border-radius:3px;background:#f3f3f3;box-shadow:inset 0 0 0 0.5px #bdbdbd"></div><svg style="position:absolute;left:36px;top:668px" width="15" height="13" viewBox="0 0 15 13"><g shape-rendering="crispEdges"><rect x="1" y="11" width="13.5" height="1.5" fill="#000"/><rect x="13" y="3" width="1.5" height="9.5" fill="#000"/><rect x="0" y="2" width="13" height="10" fill="#868686"/><rect x="1" y="0" width="6" height="3" fill="#868686"/><rect x="1" y="3" width="12" height="8" fill="url(#dith)"/><rect x="2" y="1" width="4" height="2" fill="url(#dith)"/><rect x="12" y="3" width="1" height="8" fill="#c8c8a0"/><rect x="1" y="10" width="12" height="1" fill="#c8c8a0"/></g></svg><span class="t" style="left:56.30px;top:669px;font-size:12px;transform:scaleX(0.9586);">ΑΥΘΑΙΡΕΤΑ Ν4495/2017</span><div style="position:absolute;left:12px;top:694px;width:10px;height:1px;background:repeating-linear-gradient(90deg,#8c8c8c 0 1px,transparent 1px 2px)"></div><svg style="position:absolute;left:7px;top:690px" width="9" height="9" viewBox="0 0 9 9"><rect x="0.5" y="0.5" width="8" height="8" rx="1" fill="#fff" stroke="#919191"/><rect x="1" y="5" width="7" height="3" fill="#e6e6e6"/><path d="M2 4.5 H7 M4.5 2 V7" stroke="#27408f" stroke-width="1.25"/></svg><div style="position:absolute;left:22px;top:686px;width:13px;height:13px;box-sizing:border-box;border:1px solid #6e6e6e;border-radius:3px;background:#f3f3f3;box-shadow:inset 0 0 0 0.5px #bdbdbd"></div><svg style="position:absolute;left:36px;top:686px" width="15" height="13" viewBox="0 0 15 13"><g shape-rendering="crispEdges"><rect x="1" y="11" width="13.5" height="1.5" fill="#000"/><rect x="13" y="3" width="1.5" height="9.5" fill="#000"/><rect x="0" y="2" width="13" height="10" fill="#868686"/><rect x="1" y="0" width="6" height="3" fill="#868686"/><rect x="1" y="3" width="12" height="8" fill="url(#dith)"/><rect x="2" y="1" width="4" height="2" fill="url(#dith)"/><rect x="12" y="3" width="1" height="8" fill="#c8c8a0"/><rect x="1" y="10" width="12" height="1" fill="#c8c8a0"/></g></svg><span class="t" style="left:55.33px;top:687px;font-size:12px;transform:scaleX(0.9711);">Ε.Κ.Κ.Ο.</span></div><div style="position:absolute;left:1498px;top:841px;width:411px;height:5px;background:linear-gradient(#dfeafb,#d2e0f5);border:1px solid #8ea5c8;border-right:none;box-sizing:border-box"></div><span class="t" style="left:1529.30px;top:856px;font-size:13px;font-weight:700;color:#1e395b;transform:scaleX(0.8441);">Έργο</span><span class="t" style="left:1528.37px;top:887px;font-size:13px;font-weight:700;color:#1e395b;transform:scaleX(0.9262);">Προϋπολογισμοί</span><span class="t" style="left:1529.30px;top:918px;font-size:13px;font-weight:700;color:#1e395b;transform:scaleX(0.9327);">Αμοιβές</span><span class="t" style="left:1529.30px;top:949px;font-size:13px;font-weight:700;color:#1e395b;transform:scaleX(0.9361);">Τοπογραφικά</span><span class="t" style="left:1529.30px;top:980px;font-size:13px;font-weight:700;color:#1e395b;transform:scaleX(0.8269);">ΤΕΕ online</span><span class="t" style="left:1528.41px;top:1011px;font-size:13px;font-weight:700;color:#1e395b;transform:scaleX(0.8914);">Εισφορές</span><span class="t" style="left:1529.30px;top:1042px;font-size:13px;font-weight:700;color:#1e395b;transform:scaleX(0.9762);">Αυθαίρετα</span><svg width="0" height="0" style="position:absolute"><defs>
<linearGradient id="gFold" x1="0" y1="0" x2="0" y2="1"><stop offset="0" stop-color="#fff1b8"/><stop offset="1" stop-color="#f6c85f"/></linearGradient>
<linearGradient id="gFold2" x1="0" y1="0" x2="1" y2="1"><stop offset="0" stop-color="#fbd983"/><stop offset="1" stop-color="#f5c15a"/></linearGradient>
<linearGradient id="gPage" x1="0" y1="0" x2="1" y2="1"><stop offset="0" stop-color="#ffffff"/><stop offset="0.5" stop-color="#fbfcfe"/><stop offset="1" stop-color="#d9e0f1"/></linearGradient>
<linearGradient id="gGray" x1="0" y1="0" x2="0" y2="1"><stop offset="0" stop-color="#f2f2f2"/><stop offset="0.6" stop-color="#c9c9c9"/><stop offset="1" stop-color="#9c9c9c"/></linearGradient>
<linearGradient id="gGray2" x1="0" y1="0" x2="0" y2="1"><stop offset="0" stop-color="#dcdcdc"/><stop offset="1" stop-color="#9a9a9a"/></linearGradient>
<linearGradient id="gPurp" x1="0" y1="0" x2="1" y2="0"><stop offset="0" stop-color="#9a90d0"/><stop offset="0.15" stop-color="#7868b8"/><stop offset="1" stop-color="#6a5aae"/></linearGradient>
<linearGradient id="gShut" x1="0" y1="0" x2="1" y2="1"><stop offset="0" stop-color="#ffffff"/><stop offset="1" stop-color="#b8b8b8"/></linearGradient>
<radialGradient id="gInfo" cx="0.35" cy="0.3" r="0.8"><stop offset="0" stop-color="#5aa8ff"/><stop offset="0.6" stop-color="#1560d8"/><stop offset="1" stop-color="#0a3aa0"/></radialGradient>
<linearGradient id="gGreen" x1="0" y1="0" x2="1" y2="1"><stop offset="0" stop-color="#8fe87a"/><stop offset="1" stop-color="#2f9a1f"/></linearGradient>
<linearGradient id="gW" x1="0" y1="0" x2="1" y2="1"><stop offset="0" stop-color="#ffffff"/><stop offset="1" stop-color="#d5d9f2"/></linearGradient>
<linearGradient id="gX" x1="0" y1="0" x2="1" y2="1"><stop offset="0" stop-color="#ffffff"/><stop offset="1" stop-color="#cfe6cd"/></linearGradient>
<linearGradient id="gAuth" x1="0" y1="0" x2="1" y2="0"><stop offset="0" stop-color="#5a3c9c"/><stop offset="0.5" stop-color="#5b6cc4"/><stop offset="1" stop-color="#5fb0ec"/></linearGradient>
<linearGradient id="gRoof" x1="0" y1="0" x2="1" y2="1"><stop offset="0" stop-color="#ffd27a"/><stop offset="1" stop-color="#f7902a"/></linearGradient>
<linearGradient id="gGold" x1="0" y1="0" x2="0" y2="1"><stop offset="0" stop-color="#ffe98a"/><stop offset="1" stop-color="#c9951a"/></linearGradient>
<linearGradient id="gCell" x1="0" y1="0" x2="1" y2="1"><stop offset="0" stop-color="#ffffff"/><stop offset="1" stop-color="#b9cdf5"/></linearGradient>
</defs></svg><svg style="position:absolute;left:13px;top:33px" width="32" height="26" viewBox="0 0 32 26">
<path d="M18 3.6 C20 0.6 23.5 0.8 25.6 4" fill="none" stroke="#33507a" stroke-width="1.3"/><path d="M23.3 4.6 L27.3 5.6 L26.6 1.6 Z" fill="#33507a"/>
<path d="M1.8 22.8 V6.2 Q1.8 4.6 3.4 4.6 H10 Q11 4.6 11.8 5.6 L13 7.2 H22.2 Q23.6 7.2 23.6 8.6 V10.5 H10 L2.6 23.4 Z" fill="url(#gFold)" stroke="#d9974a" stroke-width="1"/>
<path d="M9.6 10.6 H29.6 L22.4 23.6 Q22 24.2 21 24.2 H3.2 Q1.8 24.2 2.6 22.8 Z" fill="url(#gFold2)" stroke="#d9974a" stroke-width="1"/>
<path d="M10.3 11.7 H27.7" stroke="#fde9a8" stroke-width="1"/></svg><svg style="position:absolute;left:78px;top:32px" width="27" height="27" viewBox="0 0 27 27">
<path d="M0.5 0.5 H25.5 V25.5 H2.5 L0.5 23.5 Z" fill="url(#gPurp)" stroke="#5a4a9e" stroke-width="1"/>
<rect x="4" y="0.5" width="18.3" height="13.5" rx="1" fill="#fff" stroke="#cfcfe4" stroke-width="0.6"/>
<path d="M5.5 3.5 H20.8 M5.5 5.5 H20.8 M5.5 7.5 H20.8 M5.5 9.5 H20.8 M5.5 11.5 H20.8" stroke="#cfcfcf" stroke-width="0.9"/>
<rect x="6.2" y="17.8" width="11.8" height="7.8" fill="url(#gShut)"/>
<rect x="8.3" y="19" width="2.4" height="6.6" fill="#6a5aae"/>
<rect x="18.6" y="18.2" width="2.2" height="7" fill="#4d3f94"/></svg><svg style="position:absolute;left:146px;top:39px" width="12" height="15" viewBox="0 0 12 15"><path d="M0.6 0.6 H7.2 L10.6 4 V13.4 H0.6 Z" fill="url(#gPage)"/><path d="M0.6 13.4 V0.6 H7.2" fill="none" stroke="#c4cfe2" stroke-width="1"/><path d="M7.2 0.6 L10.6 4 V13.4 H0.6" fill="none" stroke="#2c4566" stroke-width="1.1"/><path d="M7.2 0.8 V4 H10.4" fill="#fff" stroke="#5c708e" stroke-width="0.7"/></svg><svg style="position:absolute;left:142.5px;top:68.5px" width="18" height="16" viewBox="0 0 18 16"><path d="M0.7 0.7 H14.3 V14.3 H2 L0.7 13 Z" fill="#7272e6" stroke="#5656c8" stroke-width="0.9"/>
<rect x="3.4" y="1.4" width="8" height="6" fill="#fff"/><path d="M4.6 3.2 H10.2 M4.6 5 H8" stroke="#8a8a9a" stroke-width="0.8"/>
<rect x="4.4" y="9.6" width="6.6" height="4.4" fill="#e8e8f0"/><rect x="5" y="10" width="2.4" height="3.4" fill="#111"/>
<path d="M6.6 5 L8.2 4 L15.4 11.2 L13.6 13 Z" fill="#e8c850" stroke="#8a7420" stroke-width="0.5"/><path d="M6.2 4 L8.2 4.2 L6.8 5.6 Z" fill="#333"/>
<circle cx="15.3" cy="12.9" r="1.8" fill="#d8503c"/></svg><svg style="position:absolute;left:310.5px;top:29.5px" width="32" height="31" viewBox="0 0 32 31">
<rect x="14.8" y="0.6" width="15.6" height="11.4" fill="#fff" stroke="#7f92b8" stroke-width="0.9"/><rect x="14.8" y="0.6" width="15.6" height="3" fill="#5f7cb8"/>
<path d="M20 3.6 V12 M25.2 3.6 V12 M14.8 6.4 H30.4 M14.8 9.2 H30.4" stroke="#8fa0c4" stroke-width="0.9"/>
<path d="M20.6 22.4 C24.6 21.6 25.6 18.6 25.2 16.4 L21.2 16.4 L25.6 11.4 L30.4 16.4 L27.6 16.4 C27.8 20 25.4 22.6 20.6 22.4 Z" fill="url(#gGreen)" stroke="#3a9a25" stroke-width="0.5"/>
<rect x="1" y="7.6" width="19.4" height="22.2" fill="#fff" stroke="#6f86a8" stroke-width="1.1"/>
<path d="M3.8 12.8 H17.6 M3.8 14.8 H5.5 M15.8 14.8 H17.6 M7.6 16.8 H13.6 M7.6 18.8 H13.6 M3.8 20.8 H5.5 M15.8 20.8 H17.6 M3.8 22.9 H17.6 M3.8 24.9 H17.6 M3.8 26.9 H17.6" stroke="#b9c6de" stroke-width="0.9"/>
<path d="M8 13.8 L4 17.8 L8 21.4 M13 13.8 L17.2 17.8 L13 21.4" fill="none" stroke="#1c1c1c" stroke-width="1.6"/>
<path d="M2.6 6.4 q1.6 -0.2 1.2 3.6 M6.6 6.4 q1.6 -0.2 1.2 3.6 M10.6 6.4 q1.6 -0.2 1.2 3.6 M14.6 6.4 q1.6 -0.2 1.2 3.6 M18.4 6.4 q1.6 -0.2 1.2 3.6" fill="none" stroke="#3c3c3c" stroke-width="1.2"/></svg><svg style="position:absolute;left:403.5px;top:30.5px" width="30" height="30" viewBox="0 0 30 30">
<rect x="7.6" y="0.9" width="13.8" height="9" fill="#fff" stroke="#8ea0c2" stroke-width="0.9"/>
<rect x="0.8" y="8.8" width="28" height="14.2" rx="1.6" fill="url(#gGray)" stroke="#6d6d6d" stroke-width="0.9"/>
<rect x="6" y="9" width="16.6" height="10.6" fill="url(#gGray2)" stroke="#6d6d6d" stroke-width="0.6"/>
<rect x="0.8" y="19.6" width="28" height="3.4" fill="#8e8e8e" opacity="0.55"/>
<rect x="17.3" y="17.4" width="4.4" height="1.3" fill="#4aa0f8"/>
<path d="M24 11.3 h2 M24 13.3 h2 M24 15.3 h2 M2.4 15.3 h1.6" stroke="#8a8a8a" stroke-width="0.8"/>
<rect x="7.8" y="20.2" width="13.6" height="8.9" fill="#fff" stroke="#8ea0c2" stroke-width="0.9"/><rect x="9.6" y="20.2" width="10" height="7" fill="#fff" stroke="#a9b8d2" stroke-width="0.6"/>
<path d="M11.2 23.3 H18 M11.2 25.3 H18" stroke="#cfcfcf" stroke-width="0.8"/></svg><svg style="position:absolute;left:479.5px;top:30.5px" width="31" height="32" viewBox="0 0 31 32">
<path d="M1 0.9 H15.4 L22.4 7.9 V28.8 H1 Z" fill="url(#gPage)" stroke="#8ea0c2" stroke-width="1"/><path d="M22.4 8.2 V28.8 H1.4" fill="none" stroke="#7d8fb0" stroke-width="1"/>
<path d="M15.4 0.9 V7.9 H22.4 Z" fill="#dce8fb" stroke="#6a7fa4" stroke-width="0.7"/><path d="M15.4 0.9 L22.4 7.9" stroke="#2c4566" stroke-width="1"/>
<path d="M21.6 20.4 L28.6 29.6" stroke="#8d8d8d" stroke-width="2.6" stroke-linecap="round"/><path d="M21.6 20.4 L28.4 29.4" stroke="#d2d2d2" stroke-width="0.9"/>
<circle cx="17.1" cy="14.4" r="7.1" fill="#cfe3fa" fill-opacity="0.92" stroke="#9a9a9a" stroke-width="1.5"/><path d="M12.6 12.6 Q15 8.6 20 9.8" fill="none" stroke="#eef6ff" stroke-width="1.6"/></svg><svg style="position:absolute;left:551px;top:31px" width="17" height="15" viewBox="0 0 17 15">
<rect x="9" y="2.6" width="6.6" height="8.4" fill="#fff" stroke="#2c4566" stroke-width="0.9"/>
<path d="M0.5 0.5 H7.4 L10.4 3.2 V13.4 H0.5 Z" fill="#fff" stroke="#b9c6dc" stroke-width="0.8"/><path d="M10.4 3.4 V13.4 H0.6" fill="none" stroke="#2c4566" stroke-width="1"/>
<circle cx="7" cy="6.9" r="4.9" fill="url(#gInfo)"/><rect x="6.3" y="6" width="1.6" height="3.6" fill="#fff"/><rect x="5.6" y="9" width="3" height="0.9" fill="#fff"/><rect x="5.7" y="5.9" width="1.4" height="0.8" fill="#fff"/><circle cx="7.1" cy="4.4" r="0.95" fill="#fff"/></svg><svg style="position:absolute;left:552px;top:53px" width="14" height="14" viewBox="0 0 14 14"><rect x="0.6" y="0.6" width="12" height="12" fill="#e8ecf2" stroke="#2c4566" stroke-width="1.2"/><rect x="1.8" y="1.8" width="9.6" height="9.6" fill="none" stroke="#8e98a6" stroke-width="0.9"/>
<rect x="3" y="3" width="7.2" height="9" fill="#fff"/><path d="M4.2 4.6 H6.6 M4.2 6.6 H9 M4.2 8.6 H9 M4.2 10.6 H9" stroke="#3a3a3a" stroke-width="0.9"/></svg><svg style="position:absolute;left:551px;top:75px" width="17" height="15" viewBox="0 0 17 15"><rect x="0.6" y="3.8" width="11" height="10" fill="url(#gPage)" stroke="#c3cfe2" stroke-width="0.7"/><path d="M11.7 4 V13.8 H0.6" fill="none" stroke="#2c4566" stroke-width="1.1"/>
<path d="M2.4 6 V12 H10" fill="none" stroke="#2b5cf0" stroke-width="1.1" stroke-dasharray="1.1 1"/>
<path d="M3 4.6 L7 0.8 L11.4 4.8 L8.6 8 Z" fill="#f2d64a"/><path d="M4.6 3.2 l4 4 M6 2 l4 4 M7.6 1.6 l-4 4 M9 3 l-3.4 3.4 M10.4 4.2 l-2.6 2.8" stroke="#8a6a10" stroke-width="0.5"/>
<path d="M8 1.8 Q11 0 14 1.4 Q15 3.6 13.4 5 L10.6 5.4 Z" fill="#f0b429"/><path d="M13.6 0.6 L16.4 0 V6.4 L13.8 4.8 Z" fill="#4aa84a"/></svg><svg style="position:absolute;left:709.5px;top:29.5px" width="17" height="17" viewBox="0 0 17 17"><rect x="0.6" y="0.8" width="9.4" height="11.6" fill="#fff" stroke="#9aa9c4" stroke-width="0.8"/><rect x="2.6" y="2.6" width="9.4" height="11.6" fill="#fff" stroke="#9aa9c4" stroke-width="0.8"/><rect x="4.6" y="4.4" width="9.4" height="11.6" fill="#fff" stroke="#9aa9c4" stroke-width="0.8"/>
<path d="M8.6 9.6 L10.6 6.4 H15.4 L14.2 9.6 Z" fill="#fff" stroke="#6c7c98" stroke-width="0.7"/><rect x="6.6" y="9.6" width="9.4" height="4.8" rx="0.6" fill="#c9d1e6" stroke="#4a5a78" stroke-width="0.8"/><rect x="7" y="13.2" width="8.6" height="1.8" fill="#5a6a88"/><rect x="11.6" y="11" width="2.6" height="1.8" fill="#1ec81e"/></svg><svg style="position:absolute;left:711px;top:52px" width="15" height="16.5" viewBox="0 0 15 16.5"><rect x="0.6" y="0.6" width="12.6" height="14.4" fill="url(#gPage)" stroke="#a9b6cd" stroke-width="0.8"/><path d="M13.3 0.8 V15.1 H0.6" fill="none" stroke="#3a4e70" stroke-width="1.2"/></svg><svg style="position:absolute;left:711px;top:74px" width="15" height="16.5" viewBox="0 0 15 16.5"><rect x="0.6" y="0.6" width="12.6" height="14.4" fill="url(#gPage)" stroke="#b4c1d8" stroke-width="0.8"/><path d="M13.3 0.8 V15.1 H0.6" fill="none" stroke="#8fa0bc" stroke-width="1"/><path d="M2.8 2.6 H6.4 M8.2 2.6 H10.6 M2.8 4.6 H6.4 M8.2 4.6 H10.6" stroke="#707888" stroke-width="0.9"/></svg><svg style="position:absolute;left:928.5px;top:30.5px" width="24" height="31" viewBox="0 0 24 31"><path d="M1 1 H15.2 L22 7.8 V28.8 H1 Z" fill="url(#gPage)"/>
<path d="M1 28.8 V1 H15.2" fill="none" stroke="#8697b6" stroke-width="1.2"/><path d="M15.2 1 L22 7.8 V28.8 H1" fill="none" stroke="#485a74" stroke-width="1.3"/>
<path d="M15 1.4 V8 H21.6 Z" fill="#e4eefc" stroke="#5b6f92" stroke-width="0.8"/>
<path d="M1.4 4 H15 M12 4 V28.4 M1.4 17.8 H12" stroke="#a9b7e2" stroke-width="1"/>
<path d="M3 6 H10.6 M3 8 H7.6 M8.8 8 H10.6 M3 10 H10.6 M14 11 H20.4 M14 13 H20.4 M3 20 H10.6 M3 22 H10.6" stroke="#bcc8e8" stroke-width="0.9"/></svg><svg style="position:absolute;left:1042px;top:32px" width="28" height="28" viewBox="0 0 28 28"><rect x="0" y="0" width="28" height="28" fill="#2f60c4"/><path d="M28 0 V28 H0 L2.4 25.6 H25.6 V2.4 Z" fill="#1c3f96"/><rect x="0.9" y="0.9" width="26.2" height="26.2" fill="none" stroke="#6f98e6" stroke-width="0.8"/>
<rect x="2.8" y="2.8" width="22.4" height="22.4" fill="url(#gW)"/>
<path d="M4.2 6.2 L11.2 6.2 L10.5 15.4 L15 6.8 L19 6.8 L18.3 15.4 L22.3 6.2 L25 6.2 L17.5 20.8 L14 20.8 L14.6 11.8 L10 20.8 L6.5 20.8 L7.1 7.6 L4.2 7.4 Z" fill="#2b5cc4" stroke="#234fae" stroke-width="0.4"/><path d="M8 7 L9.8 7 L9 17.6 Z M16 7.6 L17.6 7.6 L16.9 17.4 Z" fill="#5f8ae0" opacity="0.7"/></svg><svg style="position:absolute;left:1113px;top:32px" width="28" height="28" viewBox="0 0 28 28"><rect x="0" y="0" width="28" height="28" fill="#4f9c42"/><path d="M28 0 V28 H0 L2.4 25.6 H25.6 V2.4 Z" fill="#2c5f22"/><rect x="0.9" y="0.9" width="26.2" height="26.2" fill="none" stroke="#93cf86" stroke-width="0.8"/>
<rect x="2.8" y="2.8" width="22.4" height="22.4" fill="url(#gX)"/>
<path d="M17.8 6.3 H23.2 L16.4 13.6 L13.6 10.8 Z" fill="#4aa63c"/><path d="M11.4 13 L14.4 16 L10 20.7 H4 Z" fill="#4aa63c"/>
<path d="M4.4 6.3 H10.6 L23.7 20.6 H17.4 Z" fill="#3c962e"/><path d="M6.2 6.8 L19.6 20.2" stroke="#9be08c" stroke-width="0.9"/>
<path d="M4 20.9 H10.2 M17.4 20.9 H23.7" stroke="#235a1c" stroke-width="1.2"/><path d="M18.8 14.8 H23" stroke="#2d6e24" stroke-width="1.2"/></svg><svg style="position:absolute;left:1195.5px;top:30.5px" width="27" height="30" viewBox="0 0 27 30"><path d="M0.8 0.9 H13 L14.6 2.6 V24 H0.8 Z" fill="#eaf2fd" stroke="#93a5c4" stroke-width="0.9"/><path d="M3.8 2.9 H16 L17.6 4.6 V26 H3.8 Z" fill="#eaf2fd" stroke="#93a5c4" stroke-width="0.9"/>
<path d="M6.9 4.9 H18.8 L25 11 V28 H6.9 Z" fill="url(#gPage)" stroke="#7186a6" stroke-width="1.1"/><path d="M18.8 4.9 V11 H25" fill="#e6effc" stroke="#7186a6" stroke-width="0.8"/>
<rect x="1.4" y="15.4" width="2" height="1" fill="#111"/><rect x="5.6" y="18.4" width="1" height="1" fill="#111"/>
<path d="M10.6 18.4 C10.6 13.6 16 11.4 19.2 14.2 L20.6 12.6 L21.6 18.2 L16 17.6 L17.6 16 C15.4 14.2 12.8 15.4 12.4 18.4 Z" fill="#2e9a35"/>
<path d="M21.6 19.4 C21.4 24.2 16 26.4 12.8 23.4 L11.4 25 L10.6 19.4 L16 20 L14.4 21.6 C16.6 23.4 19.4 22.2 19.8 19.4 Z" fill="#2e9a35"/><path d="M11.6 20.4 l2.4 0.4 l-1.6 1.6 Z M12.2 16.4 q1.6 -2.6 4.6 -2.2" fill="#8fe09a" stroke="#8fe09a" stroke-width="0.6"/></svg><svg style="position:absolute;left:1502px;top:851px" width="22" height="21" viewBox="0 0 22 21"><rect x="12.4" y="1" width="3" height="3.4" fill="#d8261c"/>
<path d="M0.3 9 L7.3 12.3 L7.5 20.2 L0.5 15.6 Z" fill="#a6d2f4" stroke="#86b4e0" stroke-width="0.5"/>
<path d="M14 5.2 L7.2 11.8 L7.5 20.2 L20 16.6 L20.5 10.4 Z" fill="#fbfdff" stroke="#b4c4e0" stroke-width="0.6"/><path d="M8.2 13 L8.4 19.4 L11 18.6 V11" fill="#dfeaf8" opacity="0.8"/>
<path d="M0 8.6 L6.8 1.2 L14.6 4 L7.4 12.4 Z" fill="url(#gRoof)"/><path d="M14 4.8 L21.2 11" stroke="#e58a3a" stroke-width="1.3"/>
<path d="M12 12.6 L15.4 11.8 V18 L12 18.9 Z" fill="#6a5aae"/></svg><svg style="position:absolute;left:1502px;top:883px" width="22" height="20" viewBox="0 0 22 20"><rect x="0" y="0" width="21" height="19" fill="#c8d6f2"/><rect x="0" y="14" width="21" height="5" fill="#3f62b8"/><rect x="0.6" y="0.6" width="4.3" height="3.8" fill="url(#gCell)"/><rect x="5.7" y="0.6" width="4.3" height="3.8" fill="url(#gCell)"/><rect x="10.8" y="0.6" width="4.3" height="3.8" fill="url(#gCell)"/><rect x="15.9" y="0.6" width="4.3" height="3.8" fill="url(#gCell)"/><rect x="0.6" y="5.2" width="4.3" height="3.8" fill="url(#gCell)"/><rect x="5.7" y="5.2" width="4.3" height="3.8" fill="url(#gCell)"/><rect x="10.8" y="5.2" width="4.3" height="3.8" fill="url(#gCell)"/><rect x="15.9" y="5.2" width="4.3" height="3.8" fill="url(#gCell)"/><rect x="0.6" y="9.8" width="4.3" height="3.8" fill="url(#gCell)"/><rect x="5.7" y="9.8" width="4.3" height="3.8" fill="url(#gCell)"/><rect x="10.8" y="9.8" width="4.3" height="3.8" fill="url(#gCell)"/><rect x="15.9" y="9.8" width="4.3" height="3.8" fill="url(#gCell)"/><rect x="0.8" y="14.8" width="4" height="3.4" fill="#6f8fdc"/><rect x="5.9" y="14.8" width="4" height="3.4" fill="#6f8fdc"/><rect x="11.0" y="14.8" width="4" height="3.4" fill="#6f8fdc"/><rect x="16.1" y="14.8" width="4" height="3.4" fill="#6f8fdc"/><path d="M21.4 0.6 V19.4 H0.6" fill="none" stroke="#5a6c90" stroke-width="0.8"/><text x="10.6" y="11.8" font-family="Liberation Serif" font-size="13" font-weight="700" text-anchor="middle" fill="#000">Σ</text></svg><svg style="position:absolute;left:1502px;top:914px" width="22" height="22" viewBox="0 0 22 22"><rect x="4.4" y="0" width="17" height="17.4" fill="#b9c8e8"/><rect x="5.0" y="0.6" width="3.3" height="2.6" fill="url(#gCell)"/><rect x="9.1" y="0.6" width="3.3" height="2.6" fill="url(#gCell)"/><rect x="13.2" y="0.6" width="3.3" height="2.6" fill="url(#gCell)"/><rect x="17.3" y="0.6" width="3.3" height="2.6" fill="url(#gCell)"/><rect x="5.0" y="4.0" width="3.3" height="2.6" fill="url(#gCell)"/><rect x="9.1" y="4.0" width="3.3" height="2.6" fill="url(#gCell)"/><rect x="13.2" y="4.0" width="3.3" height="2.6" fill="url(#gCell)"/><rect x="17.3" y="4.0" width="3.3" height="2.6" fill="url(#gCell)"/><rect x="5.0" y="7.4" width="3.3" height="2.6" fill="url(#gCell)"/><rect x="9.1" y="7.4" width="3.3" height="2.6" fill="url(#gCell)"/><rect x="13.2" y="7.4" width="3.3" height="2.6" fill="url(#gCell)"/><rect x="17.3" y="7.4" width="3.3" height="2.6" fill="url(#gCell)"/><rect x="5.0" y="10.8" width="3.3" height="2.6" fill="url(#gCell)"/><rect x="9.1" y="10.8" width="3.3" height="2.6" fill="url(#gCell)"/><rect x="13.2" y="10.8" width="3.3" height="2.6" fill="url(#gCell)"/><rect x="17.3" y="10.8" width="3.3" height="2.6" fill="url(#gCell)"/><rect x="5.0" y="14.2" width="3.3" height="2.6" fill="url(#gCell)"/><rect x="9.1" y="14.2" width="3.3" height="2.6" fill="url(#gCell)"/><rect x="13.2" y="14.2" width="3.3" height="2.6" fill="url(#gCell)"/><rect x="17.3" y="14.2" width="3.3" height="2.6" fill="url(#gCell)"/><path d="M21.6 0.4 V17.6 H16" fill="none" stroke="#5a6c90" stroke-width="0.7"/><circle cx="10.6" cy="8" r="3.4" fill="#bdbdbd" stroke="#8a8a8a" stroke-width="0.5"/><path d="M10 12 Q16.6 10.6 16.4 19 H11 Z" fill="#d8405a" stroke="#a02038" stroke-width="0.4"/><circle cx="6.4" cy="10.2" r="3.7" fill="#c9c9c9" stroke="#8a8a8a" stroke-width="0.5"/><path d="M0.6 20.6 Q0 14.4 6.4 14.4 Q12.8 14.4 12.2 20.6 Q6.4 22.6 0.6 20.6 Z" fill="#5f7fe0" stroke="#3550b0" stroke-width="0.5"/><path d="M5.2 14.4 L6.4 16.8 L7.6 14.4 Z" fill="#fff"/></svg><svg style="position:absolute;left:1503px;top:946px" width="21" height="19" viewBox="0 0 21 19"><rect x="0.5" y="0.5" width="17.4" height="14.8" fill="#fff" stroke="#7c90b8" stroke-width="0.8"/><rect x="0.5" y="0.5" width="17.4" height="3.2" fill="#5f86e4"/><rect x="0.9" y="0.9" width="16.6" height="1" fill="#9ab4f0"/>
<path d="M2 6.2 H4 M5.4 6.2 H10 M11.4 6.2 H16 M2 8.4 H4 M5.4 8.4 H10 M2 10.6 H4 M5.4 10.6 H9 M2 12.8 H4 M5.4 12.8 H9" stroke="#7a94cc" stroke-width="0.9"/>
<path d="M9.6 8.2 Q9.4 7 11 7 H19.6 Q20.8 7.4 19.8 9 L16.4 13.4 H19.4 Q20.6 14 19.6 16 Q19 17.4 17.6 17.4 H10.6 Q8.8 17 10 15.4 L13.4 10.6 H10.8 Q9.6 10 9.6 8.2 Z" fill="url(#gGold)" stroke="#9a7414" stroke-width="0.6"/></svg><span class="t" style="left:1502.30px;top:980px;font-size:13.5px;font-weight:700;color:#0c6ae2;transform:scaleX(0.7962);-webkit-text-stroke:0.7px #0c6ae2;">ΤΕΕ</span><svg style="position:absolute;left:1505px;top:1006.5px" width="17" height="21" viewBox="0 0 17 21"><rect x="1.6" y="1.4" width="14.6" height="19" fill="#8794ac" opacity="0.55"/><rect x="0.5" y="0.5" width="14.6" height="19" fill="#fff" stroke="#9aa6bc" stroke-width="0.8"/>
<path d="M2.2 2.6 H6.4" stroke="#7aa6e0" stroke-width="0.9"/><path d="M8.6 2.6 H13.4 M4.4 4.6 H10 M2.2 6.6 H6.4 M8.6 6.6 H13.4 M2.2 8.6 H9.6 M11 8.6 H13.4 M2.2 10.6 H9.6 M11 10.6 H13.4 M2.2 12.6 H9.6 M11 12.6 H13.4 M2.2 14.6 H9.6 M11 14.6 H13.4 M2.2 16.6 H9.6 M11 16.6 H13.4" stroke="#f59090" stroke-width="0.9"/></svg><svg style="position:absolute;left:1501px;top:1037px" width="22" height="22" viewBox="0 0 22 22"><rect width="22" height="22" fill="url(#gAuth)"/><circle cx="11" cy="11" r="9.4" fill="none" stroke="#f2f4fb" stroke-width="1.1"/><path d="M11 1.6 V20.4 M1.6 11.4 H20.4" stroke="#f2f4fb" stroke-width="1"/><path d="M11 11 L20.10 9.63" stroke="#fff" stroke-width="0.9"/><path d="M11 11 L19.28 7.00" stroke="#fff" stroke-width="0.9"/><path d="M11 11 L17.73 4.73" stroke="#fff" stroke-width="0.9"/><path d="M11 11 L15.58 3.02" stroke="#fff" stroke-width="0.9"/><path d="M11 11 L13.01 2.02" stroke="#fff" stroke-width="0.9"/><path d="M3 7.6 Q6 5 10.6 7.6 M2.6 9.4 Q6 7 10.6 9.6 M3.2 14 Q7 12.6 10.6 14 M4.4 16.4 Q7.4 15 10.6 16.4 M11.4 14 H19.6 M11.4 16.2 H18.6 M11.4 18.2 H16.6 M5 4.6 Q7.6 3 10.4 4.4" fill="none" stroke="#e6eaf8" stroke-width="0.8"/></svg><svg style="position:absolute;left:1737px;top:1071px" width="18" height="16" viewBox="0 0 18 16"><path d="M0.8 5.8 L9 2 L17.2 5.8" fill="none" stroke="#6f6f6f" stroke-width="2"/><path d="M5.4 2.6 L9 0.9 L12.6 2.6" fill="none" stroke="#7a7a7a" stroke-width="0.9"/>
<text x="9" y="12.3" font-family="Liberation Sans" font-size="8.4" font-weight="700" text-anchor="middle" fill="#666" stroke="#666" stroke-width="0.5" textLength="15" lengthAdjust="spacingAndGlyphs">IKA</text>
<rect x="0.8" y="12.8" width="16.4" height="1.3" fill="#f0802a"/><rect x="0.8" y="14.3" width="16.4" height="0.9" fill="#6a6a6a"/></svg><svg style="position:absolute;left:1766px;top:1071px" width="13" height="16" viewBox="0 0 13 16"><rect x="1.4" y="1.4" width="11" height="14" fill="#6c7c98" opacity="0.6"/><rect x="0.5" y="0.5" width="11" height="14" fill="#fff" stroke="#9aa8c0" stroke-width="0.8"/>
<path d="M2.2 4 H5 M2.2 7 H5 M2.2 10 H5" stroke="#9aa8c0" stroke-width="0.9"/><rect x="6.4" y="2.8" width="3" height="2.6" fill="#fff" stroke="#aab6cc" stroke-width="0.6"/><rect x="6.4" y="6" width="3" height="2.6" fill="#fff" stroke="#aab6cc" stroke-width="0.6"/><rect x="6.4" y="9.2" width="3" height="2.6" fill="#fff" stroke="#aab6cc" stroke-width="0.6"/></svg><svg style="position:absolute;left:1790px;top:1071px" width="17" height="16" viewBox="0 0 17 16"><rect x="0.5" y="0.5" width="15.4" height="14.4" fill="#fff" stroke="#6f86c4" stroke-width="0.9"/><rect x="0.5" y="0.5" width="15.4" height="2.6" fill="#6f9af0"/>
<path d="M5.6 3 V14.6 M10.6 3 V14.6" stroke="#9ab0e0" stroke-width="0.8"/><rect x="2" y="4.4" width="12" height="1.5" fill="#e8503c"/><rect x="2" y="4.4" width="1.4" height="2.6" fill="#e8503c"/><rect x="12.6" y="4.4" width="1.4" height="2.6" fill="#e8503c"/>
<rect x="4.4" y="7.8" width="7.4" height="1.8" rx="0.6" fill="#3aa84a"/><rect x="9.8" y="11" width="4.4" height="1.8" rx="0.6" fill="#3f6fe0"/></svg><svg style="position:absolute;left:1816px;top:1070px" width="17" height="17" viewBox="0 0 17 17"><rect x="0.6" y="6" width="11" height="9.6" fill="url(#gPage)" stroke="#c3cfe2" stroke-width="0.7"/><path d="M11.7 6.2 V15.7 H0.6" fill="none" stroke="#4a5e80" stroke-width="1.1"/>
<path d="M2.4 10.4 H6 M2.4 12.6 H9.6 M7.4 10.4 H9.6" stroke="#9aa8c8" stroke-width="0.9"/>
<path d="M2.6 6 L6.8 2 L11.4 6.2 L8.4 9.6 Z" fill="#f2d64a"/><path d="M4.4 4.6 l4 4 M5.8 3.2 l4 4 M7.4 2.8 l-4 4 M8.8 4.2 l-3.4 3.4 M10.2 5.4 l-2.6 2.8" stroke="#8a6a10" stroke-width="0.5"/>
<path d="M7.6 2.8 Q10.8 0.8 14 2.2 Q15 4.6 13.4 6.2 L10.4 6.6 Z" fill="#f0b429"/><path d="M13.6 1.4 L16.4 0.8 V7.4 L13.8 5.8 Z" fill="#4aa84a"/></svg><div style="position:absolute;left:1839px;top:1067px;width:22px;height:23px;background:linear-gradient(#e9f1fb,#d5e3f5);border:1px solid #f8fbff;box-shadow:0 0 0 1px #a9bfe0;box-sizing:border-box"></div><svg style="position:absolute;left:1843px;top:1071px" width="15" height="16" viewBox="0 0 15 16"><rect x="1.6" y="1.6" width="12.6" height="14" fill="#5c6c8c" opacity="0.7"/><rect x="0.5" y="0.5" width="12.6" height="14" fill="#fff" stroke="#6c7c9c" stroke-width="0.8"/>
<path d="M2.2 3 H6.4 M4 5.2 H6.4 M2.2 7.4 H6.4 M4 9.6 H6.4 M2.2 11.8 H6.4" stroke="#6f8cc8" stroke-width="0.9"/><path d="M7.8 3 H11.6 M7.8 5.2 H11.6 M7.8 7.4 H11.6 M7.8 9.6 H11.6 M7.8 11.8 H11.6" stroke="#111" stroke-width="1.4"/></svg><svg style="position:absolute;left:1868px;top:1071px" width="16" height="16" viewBox="0 0 16 16"><circle cx="8" cy="8" r="7.4" fill="#eef4fc" stroke="#7f9cd0" stroke-width="0.9"/><circle cx="8" cy="8" r="5.9" fill="url(#gInfo)"/><text x="8" y="12" font-family="Liberation Sans" font-size="11" font-weight="700" fill="#fff" text-anchor="middle">?</text></svg><svg style="position:absolute;left:1897px;top:1071px" width="10" height="16" viewBox="0 0 10 16"><path d="M1 1.2 L4 3.6 L1 6 M5 1.2 L8 3.6 L5 6" fill="none" stroke="#7a8aa4" stroke-width="1"/><path d="M2 11 H8 L5 14 Z" fill="#6d7a8c"/></svg><div style="position:absolute;left:0;top:1094px;width:1909px;height:2px;background:linear-gradient(#9db3d5,#6c8cc0)"></div></body></html>
